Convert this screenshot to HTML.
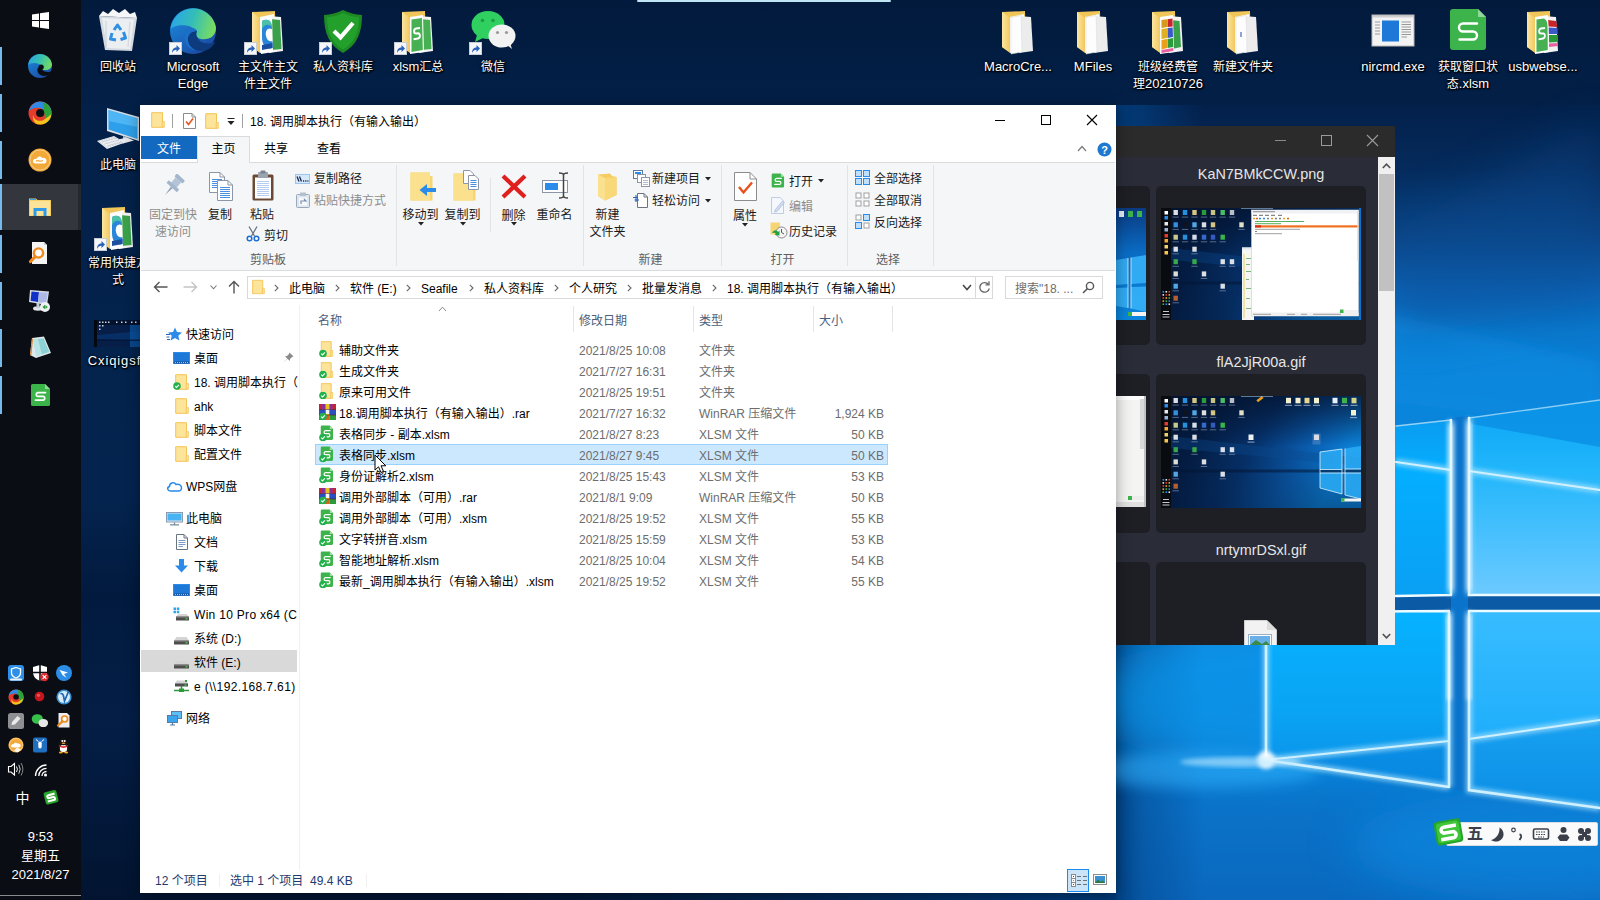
<!DOCTYPE html>
<html lang="zh-CN">
<head>
<meta charset="utf-8">
<title>18. 调用脚本执行（有输入输出）</title>
<style>
*{box-sizing:border-box;margin:0;padding:0}
html,body{width:1600px;height:900px;overflow:hidden;background:#04183c}
body{font-family:"Liberation Sans","Noto Sans CJK SC",sans-serif;font-size:12px;color:#000;position:relative}
.abs{position:absolute}
#wall{position:absolute;left:0;top:0;width:1600px;height:900px}
/* taskbar */
#tb{position:absolute;left:0;top:0;width:81px;height:900px;background:#0a0d13}
#tb .ind{position:absolute;left:0;width:2px;height:38px;background:#76b9ed}
#tb .act{position:absolute;left:0;top:184px;width:81px;height:46px;background:#33363c}
#tb .clock{position:absolute;left:0;width:81px;text-align:center;color:#fff;font-size:13px;line-height:19px}
/* desktop icons */
.dico{position:absolute;width:76px;text-align:center;color:#fff;font-size:12px;line-height:17px;margin-top:0px;text-shadow:0 1px 2px #000,0 0 3px #000,1px 1px 1px #000}
.dico .lt{font-size:13px;line-height:10px}
.dico svg{display:block;margin:0 auto 4px auto}
/* explorer */
#ex{position:absolute;left:140px;top:105px;width:976px;height:788px;background:#fff;box-shadow:0 2px 14px rgba(0,0,0,0.38)}
#ex .title{position:absolute;left:0;top:0;width:100%;height:31px;background:#fff}
#ex .tabs{position:absolute;left:1px;top:31px;width:974px;height:26px;background:#fff}
#ex .ribbon{position:absolute;left:1px;top:57px;width:974px;height:109px;background:#f5f6f7;border-top:1px solid #dadbdc;border-bottom:1px solid #dadbdc}
.rt{position:absolute;font-size:12px;line-height:17px;color:#1a1a1a;white-space:nowrap}
.rt.c{text-align:center}
.rt.dis{color:#8d8d8d}
.rt.grp{color:#5f5f5f}
.sep{position:absolute;width:1px;background:#e2e3e4}
/* list */
.row{position:absolute;left:175px;height:21px;width:573px;font-size:12px;line-height:21px;white-space:nowrap}
.row span{position:absolute;top:2px}
.row .n{left:24px;color:#000}
.row .d{left:264px;color:#6d6d6d}
.row .t{left:384px;color:#6d6d6d}
.row .s{right:4px;color:#6d6d6d;text-align:right}
.row svg{position:absolute;left:3px;top:2px}
.nav{position:absolute;font-size:12px;line-height:24px;height:24px;white-space:nowrap;color:#000}
.nav svg{position:absolute;top:4px}
/* dark viewer */
#dv{position:absolute;left:1116px;top:126px;width:279px;height:519px;background:#2a2d38;overflow:hidden}
</style>
</head>
<body>
<svg id="wall" viewBox="0 0 1600 900" width="1600" height="900">
<defs>
<linearGradient id="gLeft" x1="0" y1="0" x2="0" y2="1">
<stop offset="0" stop-color="#021a3c"/><stop offset="0.12" stop-color="#032048"/><stop offset="0.55" stop-color="#04244f"/><stop offset="0.66" stop-color="#021a3e"/><stop offset="0.8" stop-color="#041e46"/><stop offset="1" stop-color="#021430"/>
</linearGradient>
<linearGradient id="gSky" x1="0" y1="105" x2="0" y2="900" gradientUnits="userSpaceOnUse">
<stop offset="0" stop-color="#03204a"/><stop offset="0.08" stop-color="#052b5c"/><stop offset="0.17" stop-color="#094688"/><stop offset="0.235" stop-color="#0a62b4"/><stop offset="0.285" stop-color="#0a78cc"/><stop offset="0.37" stop-color="#0a84da"/><stop offset="0.5" stop-color="#0a88de"/><stop offset="0.7" stop-color="#0a84da"/><stop offset="0.85" stop-color="#0a76cc"/><stop offset="1" stop-color="#0a68be"/>
</linearGradient>
<linearGradient id="gFade" x1="1114" y1="0" x2="1204" y2="0" gradientUnits="userSpaceOnUse">
<stop offset="0" stop-color="#003a78" stop-opacity="0.9"/><stop offset="0.35" stop-color="#04488e" stop-opacity="0.5"/><stop offset="1" stop-color="#06408a" stop-opacity="0"/>
</linearGradient>
<linearGradient id="gBot" x1="500" y1="0" x2="1116" y2="0" gradientUnits="userSpaceOnUse">
<stop offset="0" stop-color="#003a78" stop-opacity="0"/><stop offset="1" stop-color="#003a78" stop-opacity="1"/>
</linearGradient>
<linearGradient id="gPaneLL" x1="0" y1="611" x2="0" y2="790" gradientUnits="userSpaceOnUse">
<stop offset="0" stop-color="#06b2ff"/><stop offset="0.55" stop-color="#0aa4f4"/><stop offset="1" stop-color="#0b8ee6"/>
</linearGradient>
<linearGradient id="gPaneLR" x1="0" y1="611" x2="0" y2="800" gradientUnits="userSpaceOnUse">
<stop offset="0" stop-color="#38bcff"/><stop offset="0.6" stop-color="#22b0fc"/><stop offset="1" stop-color="#0d94ea"/>
</linearGradient>
<linearGradient id="gPaneUR" x1="0" y1="418" x2="0" y2="595" gradientUnits="userSpaceOnUse">
<stop offset="0" stop-color="#10a8f6"/><stop offset="0.3" stop-color="#22b6fb"/><stop offset="1" stop-color="#6ccaff"/>
</linearGradient>
<linearGradient id="gPaneUL" x1="0" y1="420" x2="0" y2="595" gradientUnits="userSpaceOnUse">
<stop offset="0" stop-color="#0a9cf0"/><stop offset="0.3" stop-color="#04aeff"/><stop offset="1" stop-color="#0aa0f4"/>
</linearGradient>
<filter id="b2" x="-20%" y="-20%" width="140%" height="140%"><feGaussianBlur stdDeviation="2"/></filter>
<filter id="b6" x="-30%" y="-30%" width="160%" height="160%"><feGaussianBlur stdDeviation="7"/></filter>
<filter id="b20" x="-30%" y="-30%" width="160%" height="160%"><feGaussianBlur stdDeviation="22"/></filter>
</defs>
<rect width="1600" height="900" fill="url(#gLeft)"/>
<rect x="1114" y="105" width="486" height="795" fill="url(#gSky)"/>
<rect x="1114" y="105" width="90" height="795" fill="url(#gFade)"/>
<rect x="500" y="880" width="616" height="20" fill="url(#gBot)"/>
<!-- soft beams in the sky -->
<polygon points="1380,312 1600,362 1600,430 1380,400" fill="#0b8ce2" opacity="0.6" filter="url(#b6)"/>
<polygon points="1395,230 1600,120 1600,300 1395,340" fill="#0a4f98" opacity="0.35" filter="url(#b20)"/>
<!-- floor glow -->
<ellipse cx="1330" cy="700" rx="260" ry="70" fill="#0aa0f4" opacity="0.55" filter="url(#b20)"/>
<ellipse cx="1200" cy="770" rx="120" ry="18" fill="#35b4ff" opacity="0.5" filter="url(#b6)"/>
<ellipse cx="1540" cy="845" rx="190" ry="55" fill="#0f8ee6" opacity="0.55" filter="url(#b20)"/>
<!-- frame bars (dark) -->
<polygon points="1260,596 1600,594 1600,612 1260,613" fill="#0a5aa6"/>
<polygon points="1451,418 1468,416 1468,792 1451,789" fill="#0a74cc"/>
<!-- panes -->
<polygon points="1266,440 1451,420 1451,595 1266,597" fill="url(#gPaneUL)"/>
<polygon points="1468,418 1600,400 1600,595 1468,595" fill="url(#gPaneUR)"/>
<polygon points="1468,418 1600,400 1600,447 1472,424" fill="#0a8ee4" opacity="0.8"/>
<polygon points="1266,612 1449,611 1449,787 1266,760" fill="url(#gPaneLL)"/>
<polygon points="1468,611 1600,611 1600,808 1468,790" fill="url(#gPaneLR)"/>
<!-- lower shading under beams -->
<polygon points="1266,760 1449,741 1449,787" fill="#0a84dc" opacity="0.55"/>
<polygon points="1468,739 1600,720 1600,808 1468,790" fill="#0a8ce2" opacity="0.45"/>
<!-- bright edges -->
<g stroke="#eefbff" stroke-width="2.6" fill="none" stroke-linecap="round">
<path d="M1266,470 L1266,760" />
<path d="M1266,760 L1449,787 M1449,611 L1449,787 M1300,612 L1449,611"/>
<path d="M1469,611 L1469,790 L1600,808 M1469,611 L1600,611"/>
<path d="M1451,420 L1451,595 M1396,596 L1451,595"/><path d="M1396,426 L1451,420" stroke-width="1.4" opacity="0.6"/>
<path d="M1469,418 L1469,595 L1600,595"/><path d="M1469,418 L1600,400" stroke-width="1.4" opacity="0.55"/>
<path d="M1266,760 L1449,741 M1469,739 L1600,720" stroke-width="2"/>
<path d="M1396,462 L1451,470 M1469,471 L1600,490" stroke-width="2"/>
</g>
<g stroke="#b4e8ff" stroke-width="7" fill="none" opacity="0.6" filter="url(#b2)">
<path d="M1266,560 L1266,760 L1449,787 M1449,611 L1449,787 M1469,611 L1469,790 L1600,808 M1451,420 L1451,595 M1469,418 L1469,595 M1266,760 L1449,741 M1469,739 L1600,720 M1396,462 L1451,470 M1469,471 L1600,490"/>
</g>
<path d="M1449,615 V700 M1469,615 V700 M1451,425 V590 M1469,423 V590" stroke="#ffffff" stroke-width="5" opacity="0.55" filter="url(#b2)" fill="none"/>
<circle cx="1266" cy="760" r="9" fill="#fff" opacity="0.9" filter="url(#b2)"/>
<ellipse cx="1240" cy="762" rx="60" ry="5" fill="#bfeaff" opacity="0.6" filter="url(#b2)"/>
<!-- top centre light bar -->
<rect x="637" y="0" width="254" height="2" rx="1" fill="#bfe6f5"/>
</svg>


<svg width="0" height="0" style="position:absolute">
<defs>
<linearGradient id="fy" x1="0" y1="0" x2="1" y2="0"><stop offset="0" stop-color="#fbe6a2"/><stop offset="1" stop-color="#f2c85e"/></linearGradient>
<linearGradient id="edA" x1="0" y1="0.2" x2="1" y2="0.4"><stop offset="0" stop-color="#2aa4ec"/><stop offset="0.5" stop-color="#33bdb8"/><stop offset="1" stop-color="#78dc62"/></linearGradient>
<linearGradient id="edB" x1="0" y1="0" x2="0.7" y2="1"><stop offset="0" stop-color="#1b93e4"/><stop offset="1" stop-color="#1b4aa4"/></linearGradient>
<symbol id="fold" viewBox="0 0 48 48">
<path d="M8,5 L31,4 L32,40 L16,45 L8,40Z" fill="#f0c659"/>
<path d="M8,5 L16,11 L16,46 L8,40Z" fill="url(#fy)"/>
</symbol>
<symbol id="pgs" viewBox="0 0 48 48">
<path d="M16,10 L30,7 L30,43 L16,46Z" fill="#fafafa"/>
<path d="M24,9 L37,10 L39,44 L25,46Z" fill="#ececec"/>
<path d="M17,10.500 L27,8.500 L28,45 L17,47Z" fill="#fdfdfd" stroke="#d8d8d8" stroke-width="0.500"/>
</symbol>
<symbol id="sc" viewBox="0 0 13 13">
<rect x="0" y="0" width="13" height="13" fill="#f4f6f8"/><rect x="0.500" y="0.500" width="12" height="12" fill="none" stroke="#c9ced6" stroke-width="1"/>
<path d="M3,11 C3,7 5,5.500 7.500,5.500 V3 L11,6.500 L7.500,10 V7.800 C5.500,7.800 4,8.500 3,11Z" fill="#2a62b8"/>
</symbol>
<symbol id="edge" viewBox="0 0 48 48">
<circle cx="24" cy="24" r="23" fill="url(#edB)"/>
<path d="M1.500,22 A23,23 0 0 1 47,20.500 C47,30 39.500,33 32,32 C27,31 26,27 28,24 C20.500,15.500 5,17.500 1.500,22Z" fill="url(#edA)"/>
<path d="M28,24 C22,24 18,28 19,34 C20,41 28,46 38,43 C42,41.500 45,38 46.500,34.500 C42,37.500 32,37.500 28.500,31 C27,28.500 27.200,26 28,24Z" fill="#0d3b7e"/>
<path d="M28,24 C22,24 18,28 19,34 C19.600,38 22.500,41.500 27,43.300 C15,42 12,28 20,22 C23,20 26.500,21.500 28,24Z" fill="#1a6fc8"/>
</symbol>
<symbol id="wpsS" viewBox="0 0 36 41">
<path d="M3,0 H28 L36,8 V38 A3,3 0 0 1 33,41 H3 A3,3 0 0 1 0,38 V3 A3,3 0 0 1 3,0Z" fill="#3cb44b"/>
<path d="M28,0 L36,8 H28Z" fill="#8fd898"/>
<path d="M27,14.500 H13 A4,4 0 0 0 13,22.500 H23 A4,4 0 0 1 23,30.500 H9.500" fill="none" stroke="#fff" stroke-width="2.400" stroke-linecap="round"/>
</symbol>
</defs>
</svg>

<div class="dico" style="left:80px;top:7px"><svg width="48" height="48" viewBox="0 0 48 48"><path d="M5,9 L43,11 L38,44 L11,43Z" fill="#dfe5ea" opacity="0.950"/><path d="M5,9 L9,4 L14,7 L19,2 L25,6 L31,2 L36,7 L41,5 L43,11Z" fill="#f4f6f8"/><path d="M8,11 L40,12.500 L36,42 L13,41Z" fill="#eef1f4" opacity="0.900"/><path d="M12,14 L12,40 M36,15 L34,40" stroke="#cfd6dc" stroke-width="1.500" opacity="0.800"/><g fill="none" stroke="#2f8fe2" stroke-width="3" stroke-linejoin="round"><path d="M20,23 L23.500,18 L27,23"/><path d="M29.500,25 L31.500,31 L26.500,32.500"/><path d="M22,33 L16.500,32 L18,26"/></g></svg>回收站</div>
<div class="dico" style="left:155px;top:7px"><svg width="48" height="48" viewBox="0 0 48 48"><use href="#edge" x="0" y="0" width="48" height="48"/><use href="#sc" x="0" y="35" width="13" height="13"/></svg><span class="lt">Microsoft</span><br><span class="lt">Edge</span></div>
<div class="dico" style="left:230px;top:7px"><svg width="48" height="48" viewBox="0 0 48 48"><use href="#fold" width="48" height="48"/><path d="M16,10 L30,7 L30,43 L16,46Z" fill="#fafafa"/><path d="M24,9 L37,10 L39,44 L25,46Z" fill="#f2f2f2"/><path d="M26,12 L36,13 L37.500,42 L27,43Z" fill="#3aa14a"/><path d="M17,11 L28,9 L29,45 L17,47Z" fill="#fdfdfd"/><path d="M18,14 C24,11 28,14 28,22 C24,20 21,23 22,29 C23,34 27,35 28.500,34 L28.500,41 C22,43 18,38 18,30Z" fill="#2a86d8"/><path d="M18,14 C24,11 28,14 28,20 C24,16 20,18 18,22Z" fill="#4cc0a8"/><path d="M18,38 L28.500,36 L28.500,41 L18,43Z" fill="#1d4fa0"/><use href="#sc" x="0" y="35" width="13" height="13"/></svg>主文件主文<br>件主文件</div>
<div class="dico" style="left:305px;top:7px"><svg width="48" height="48" viewBox="0 0 48 48"><path d="M24,3 C30,6 36,7.500 43,8 C43,26 38,38 24,46 C10,38 5,26 5,8 C12,7.500 18,6 24,3Z" fill="#1d8a24"/><path d="M24,6 C29,8.500 34,9.800 40,10.300 C40,25 36,35.500 24,42.500 C12,35.500 8,25 8,10.300 C14,9.800 19,8.500 24,6Z" fill="#23a02c"/><path d="M15,24 L21.500,30.500 L34,16" fill="none" stroke="#fff" stroke-width="4.200"/><use href="#sc" x="0" y="35" width="13" height="13"/></svg>私人资料库</div>
<div class="dico" style="left:380px;top:7px"><svg width="48" height="48" viewBox="0 0 48 48"><use href="#fold" width="48" height="48"/><path d="M24,9 L37,10 L39,44 L25,46Z" fill="#f2f2f2"/><path d="M26,12 L36,13 L37.500,42 L27,43Z" fill="#46b052"/><path d="M16,10 L29,8 L30,45 L16,47Z" fill="#fdfdfd"/><path d="M17.500,12.500 L28,11 L28.800,43 L17.500,45Z" fill="#46b052"/><path d="M26,21 L22,21.500 C19.500,22 19.500,26.500 22,26.500 L24,26.300 C26.500,26.200 26.500,31 24,31.500 L19.500,32.300" fill="none" stroke="#fff" stroke-width="2"/><use href="#sc" x="0" y="35" width="13" height="13"/></svg><span class="lt">xlsm</span>汇总</div>
<div class="dico" style="left:455px;top:7px"><svg width="48" height="48" viewBox="0 0 48 48"><ellipse cx="19" cy="18" rx="16.500" ry="14" fill="#2fd060"/><path d="M8,28 L6,35 L14,31Z" fill="#2fd060"/><circle cx="13.500" cy="13.500" r="1.800" fill="#1e9a44"/><circle cx="24" cy="13.500" r="1.800" fill="#1e9a44"/><ellipse cx="33" cy="29" rx="13.500" ry="11.500" fill="#f2f2f2"/><path d="M38,38 L43,42 L41,36Z" fill="#f2f2f2"/><circle cx="28.500" cy="25.500" r="1.600" fill="#9a9a9a"/><circle cx="37.500" cy="25.500" r="1.600" fill="#9a9a9a"/><use href="#sc" x="0" y="35" width="13" height="13"/></svg>微信</div>
<div class="dico" style="left:980px;top:7px"><svg width="48" height="48" viewBox="0 0 48 48"><use href="#fold" width="48" height="48"/><use href="#pgs" width="48" height="48"/></svg><span class="lt">MacroCre...</span></div>
<div class="dico" style="left:1055px;top:7px"><svg width="48" height="48" viewBox="0 0 48 48"><use href="#fold" width="48" height="48"/><use href="#pgs" width="48" height="48"/></svg><span class="lt">MFiles</span></div>
<div class="dico" style="left:1130px;top:7px"><svg width="48" height="48" viewBox="0 0 48 48"><use href="#fold" width="48" height="48"/><path d="M24,9 L37,10 L39,44 L25,46Z" fill="#f2f2f2"/><path d="M27,13 L35.500,14 L37,40 L28,42Z" fill="#3aa14a"/><path d="M16,10 L29,8 L30,45 L16,47Z" fill="#fdfdfd"/><path d="M17.500,13 L23,12.200 L23,20 L17.500,21Z" fill="#d89a1c"/><path d="M23.500,12.200 L28.500,11.500 L28.700,19.500 L23.500,20Z" fill="#c8242c"/><path d="M17.500,22 L23,21.200 L23,31 L17.500,32Z" fill="#e0b020"/><path d="M23.500,21 L28.700,20.500 L29,30 L23.500,31Z" fill="#3a58c8"/><path d="M17.500,33 L23,32 L23,41 L17.500,42.500Z" fill="#e8a018"/><path d="M23.500,32 L29,31 L29.200,40 L23.500,41Z" fill="#2c9a38"/><path d="M17.500,43 L29.200,41 L29.300,44 L17.500,46Z" fill="#e860a0"/></svg>班级经费管<br>理<span class="lt">20210726</span></div>
<div class="dico" style="left:1205px;top:7px"><svg width="48" height="48" viewBox="0 0 48 48"><use href="#fold" width="48" height="48"/><use href="#pgs" width="48" height="48"/><rect x="21" y="25" width="2" height="5" fill="#8aa4d8"/></svg>新建文件夹</div>
<div class="dico" style="left:1355px;top:7px"><svg width="48" height="48" viewBox="0 0 48 48"><rect x="3" y="8" width="42" height="31" fill="#f3f3f3"/><rect x="3" y="8" width="42" height="2.500" fill="#cfcfcf"/><rect x="3" y="8" width="42" height="31" fill="none" stroke="#b9b9b9" stroke-width="1"/><rect x="13" y="13.500" width="17" height="21" fill="#1d78d8"/><g stroke="#9a9a9a" stroke-width="1"><path d="M32.500,15 H42 M32.500,17.500 H42 M32.500,20 H42 M32.500,22.500 H42 M32.500,25 H42 M32.500,27.500 H42 M32.500,30 H38 M6,15 H11 M6,18 H11 M6,21 H11 M6,24 H11 M6,27 H11"/></g></svg><span class="lt">nircmd.exe</span></div>
<div class="dico" style="left:1430px;top:7px"><svg width="48" height="48" viewBox="0 0 48 48"><use href="#wpsS" x="6" y="2" width="36" height="41"/></svg>获取窗口状<br>态<span class="lt">.xlsm</span></div>
<div class="dico" style="left:1505px;top:7px"><svg width="48" height="48" viewBox="0 0 48 48"><use href="#fold" width="48" height="48"/><path d="M24,9 L37,10 L39,44 L25,46Z" fill="#f2f2f2"/><path d="M29,13 L37,14 L38.500,20 L29.500,19.500Z" fill="#c8242c"/><path d="M29.500,20.500 L38.500,21 L38.800,27 L29.800,27Z" fill="#3a58c8"/><path d="M29.800,28 L38.800,28 L39,35 L30,35.500Z" fill="#2c9a38"/><path d="M30,36.500 L39,36 L39,39 L30,40Z" fill="#e860a0"/><path d="M16,10 L29,8 L30,45 L16,47Z" fill="#fdfdfd"/><path d="M17.500,12.500 L25,11.500 C28,13 28.500,16 28.500,20 L28.800,43 L17.500,45Z" fill="#46b052"/><path d="M26,21 L22,21.500 C19.500,22 19.500,26.500 22,26.500 L24,26.300 C26.500,26.200 26.500,31 24,31.500 L19.500,32.300" fill="none" stroke="#fff" stroke-width="1.800"/></svg><span class="lt">usbwebse...</span></div>
<div class="dico" style="left:80px;top:105px"><svg width="48" height="48" viewBox="0 0 48 48"><path d="M13,3 L45,12 L45,36 L13,26Z" fill="#d9dee4"/><path d="M14.500,5 L43.500,13.200 L43.500,34 L14.500,24.500Z" fill="#2e9fea"/><path d="M14.500,5 L43.500,13.200 L43.500,22 L14.500,16Z" fill="#5cc0f8" opacity="0.700"/><path d="M29,31 L33,32.500 L33,36 L29,35Z" fill="#b9c0c8"/><path d="M22,35 L33,32.500 L40,35.500 L29,38.500Z" fill="#e3e7eb"/><path d="M3,36 L20,31 L31,37.500 L13,44Z" fill="#eef0f3"/><path d="M5,36.300 L20,32 L28.500,37.300 L13,42.500Z" fill="none" stroke="#b9c0c8" stroke-width="0.800" stroke-dasharray="1.500 1"/><path d="M8,37 L22,33.200 M10.500,39 L25,35 M13,41 L27.500,36.800" stroke="#b9c0c8" stroke-width="0.700"/></svg>此电脑</div>
<div class="dico" style="left:80px;top:203px"><svg width="48" height="48" viewBox="0 0 48 48"><use href="#fold" width="48" height="48"/><path d="M16,10 L30,7 L30,43 L16,46Z" fill="#fafafa"/><path d="M24,9 L37,10 L39,44 L25,46Z" fill="#f2f2f2"/><path d="M26,12 L36,13 L37.500,42 L27,43Z" fill="#3aa14a"/><path d="M17,11 L28,9 L29,45 L17,47Z" fill="#fdfdfd"/><path d="M18,14 C24,11 28,14 28,22 C24,20 21,23 22,29 C23,34 27,35 28.500,34 L28.500,41 C22,43 18,38 18,30Z" fill="#2a86d8"/><path d="M18,14 C24,11 28,14 28,20 C24,16 20,18 18,22Z" fill="#4cc0a8"/><path d="M18,38 L28.500,36 L28.500,41 L18,43Z" fill="#1d4fa0"/><use href="#sc" x="0" y="35" width="13" height="13"/></svg>常用快捷方<br>式</div>
<div class="dico" style="left:80px;top:301px"><svg width="48" height="48" viewBox="0 0 48 48"><rect x="0" y="19" width="48" height="27" fill="#071f48"/><rect x="0" y="19" width="48" height="5" fill="#04122e"/><rect x="0" y="19" width="3" height="27" fill="#05080e"/><path d="M3,34 L48,30 V40 L3,38Z" fill="#0a3a7a" opacity="0.600"/><rect x="36" y="24" width="12" height="22" fill="#0a58a8" opacity="0.700"/><rect x="3" y="38.500" width="45" height="1.500" fill="#031230" opacity="0.700"/><g fill="#c8d4e4"><rect x="5" y="20.500" width="1.500" height="1.500"/><rect x="8" y="20.500" width="1.500" height="1.500"/><rect x="11" y="20.500" width="1.500" height="1.500"/><rect x="14" y="20.500" width="1.500" height="1.500"/><rect x="22" y="20.500" width="1.500" height="1.500"/><rect x="27" y="20.500" width="1.500" height="1.500"/><rect x="31" y="20.500" width="1.500" height="1.500"/><rect x="37" y="20.500" width="1.500" height="1.500"/><rect x="41" y="20.500" width="1.500" height="1.500"/><rect x="5" y="24" width="1.500" height="1.500"/><rect x="8" y="24" width="1.500" height="1.500"/><rect x="5" y="27.500" width="1.500" height="1.500"/></g></svg><span class="lt" style="letter-spacing:0.9px;margin-right:-1px">Cxiqigsf7</span></div>
<div id="dv">
<div class="abs" style="left:0;top:0;width:280px;height:31px;background:#2b2b2b"></div>
<svg class="abs" style="left:157px;top:8px" width="110" height="14" viewBox="0 0 110 14"><path d="M2,6.500 H13" stroke="#8a8a8a" stroke-width="1"/><rect x="48.500" y="1.500" width="10" height="10" fill="none" stroke="#9a9a9a" stroke-width="1"/><path d="M94,1 L105,12 M105,1 L94,12" stroke="#9a9a9a" stroke-width="1.100"/></svg>
<div class="abs" style="left:262px;top:31px;width:17px;height:488px;background:#f0f0f0"></div>
<div class="abs" style="left:263px;top:48px;width:15px;height:117px;background:#c1c1c1"></div>
<svg class="abs" style="left:266px;top:37px" width="9" height="6" viewBox="0 0 9 6"><path d="M0.800,5 L4.500,1.200 L8.200,5" fill="none" stroke="#505050" stroke-width="1.600"/></svg>
<svg class="abs" style="left:266px;top:507px" width="9" height="6" viewBox="0 0 9 6"><path d="M0.800,1 L4.500,4.800 L8.200,1" fill="none" stroke="#505050" stroke-width="1.600"/></svg>
<div class="abs" style="left:39px;top:39px;width:212px;text-align:center;color:#e6e6e6;font-size:14.4px;line-height:18px;font-family:'Liberation Sans',sans-serif">KaN7BMkCCW.png</div>
<div class="abs" style="left:40px;top:60px;width:210px;height:159px;background:#1e1f25;border-radius:5px"></div>
<div class="abs" style="left:-11px;top:60px;width:45px;height:159px;background:#1e1f25;border-radius:5px"></div>
<div class="abs" style="left:45px;top:82px;width:200px;height:112px"><svg width="200" height="112" viewBox="0 0 200 112" style="display:block"><defs><linearGradient id="mga" x1="0" y1="0" x2="1" y2="0.300"><stop offset="0" stop-color="#03142f"/><stop offset="0.300" stop-color="#041e46"/><stop offset="0.550" stop-color="#06326c"/><stop offset="0.800" stop-color="#0a5cae"/><stop offset="1" stop-color="#0b80d6"/></linearGradient><linearGradient id="mva" x1="0" y1="0" x2="0" y2="1"><stop offset="0" stop-color="#03132f" stop-opacity="0.750"/><stop offset="0.450" stop-color="#03132f" stop-opacity="0"/><stop offset="1" stop-color="#03132f" stop-opacity="0.350"/></linearGradient></defs><rect width="200" height="112" fill="url(#mga)"/><rect width="200" height="112" fill="url(#mva)"/><path d="M10,40 L200,62 V70 L10,52Z" fill="#0c4a90" opacity="0.350"/><rect x="10" y="73.500" width="190" height="3" fill="#031634" opacity="0.550"/><rect x="0" y="0" width="10" height="112" fill="#080b10"/><rect x="3.500" y="3" width="3.500" height="3.500" fill="#ffffff"/><rect x="3.500" y="8" width="3.500" height="3.500" fill="#2a8be8"/><rect x="3.500" y="14" width="3.500" height="3.500" fill="#e8e8e8"/><rect x="3.500" y="20" width="3.500" height="3.500" fill="#9ab4d8"/><rect x="3.500" y="26" width="3.500" height="3.500" fill="#e53b2c"/><rect x="3.500" y="31" width="3.500" height="3.500" fill="#f3a83a"/><rect x="3.500" y="37" width="3.500" height="3.500" fill="#f0d070"/><rect x="3.500" y="43" width="3.500" height="3.500" fill="#f5c74e"/><rect x="1.5" y="83.0" width="1.600" height="1.600" fill="#2a8be8"/><rect x="4.5" y="83.0" width="1.600" height="1.600" fill="#e8e8e8"/><rect x="7.5" y="83.0" width="1.600" height="1.600" fill="#e53b2c"/><rect x="1.5" y="86.1" width="1.600" height="1.600" fill="#e8e8e8"/><rect x="4.5" y="86.1" width="1.600" height="1.600" fill="#e53b2c"/><rect x="7.5" y="86.1" width="1.600" height="1.600" fill="#f3a83a"/><rect x="1.5" y="89.2" width="1.600" height="1.600" fill="#e53b2c"/><rect x="4.5" y="89.2" width="1.600" height="1.600" fill="#f3a83a"/><rect x="7.5" y="89.2" width="1.600" height="1.600" fill="#3cb44b"/><rect x="1.5" y="92.3" width="1.600" height="1.600" fill="#f3a83a"/><rect x="4.5" y="92.3" width="1.600" height="1.600" fill="#3cb44b"/><rect x="7.5" y="92.3" width="1.600" height="1.600" fill="#2a8be8"/><rect x="1.5" y="95.4" width="1.600" height="1.600" fill="#3cb44b"/><rect x="4.5" y="95.4" width="1.600" height="1.600" fill="#2a8be8"/><rect x="7.5" y="95.4" width="1.600" height="1.600" fill="#e8e8e8"/><rect x="2" y="103" width="6" height="1" fill="#c8c8c8"/><rect x="1.500" y="106" width="7" height="1" fill="#c8c8c8"/><rect x="1.500" y="108.500" width="7" height="1" fill="#c8c8c8"/><rect x="12.5" y="2.0" width="4.400" height="5" fill="#eef0f2" opacity="0.920"/><rect x="11.5" y="8.6" width="6.400" height="1" fill="#a8b8d4" opacity="0.500"/><rect x="21.8" y="2.0" width="4.400" height="5" fill="#2a9be8" opacity="0.920"/><rect x="20.8" y="8.6" width="6.400" height="1" fill="#a8b8d4" opacity="0.500"/><rect x="31.3" y="2.0" width="4.400" height="5" fill="#e8d48a" opacity="0.920"/><rect x="30.3" y="8.6" width="6.400" height="1" fill="#a8b8d4" opacity="0.500"/><rect x="40.8" y="2.0" width="4.400" height="5" fill="#2aa83a" opacity="0.920"/><rect x="39.8" y="8.6" width="6.400" height="1" fill="#a8b8d4" opacity="0.500"/><rect x="49.8" y="2.0" width="4.400" height="5" fill="#d8d48a" opacity="0.920"/><rect x="48.8" y="8.6" width="6.400" height="1" fill="#a8b8d4" opacity="0.500"/><rect x="59.5" y="2.0" width="4.400" height="5" fill="#4ccc6a" opacity="0.920"/><rect x="58.5" y="8.6" width="6.400" height="1" fill="#a8b8d4" opacity="0.500"/><rect x="68.8" y="2.0" width="4.400" height="5" fill="#c8ccd4" opacity="0.920"/><rect x="67.8" y="8.6" width="6.400" height="1" fill="#a8b8d4" opacity="0.500"/><rect x="12.5" y="14.3" width="4.400" height="5" fill="#3a9ae8" opacity="0.920"/><rect x="11.5" y="20.9" width="6.400" height="1" fill="#a8b8d4" opacity="0.500"/><rect x="21.8" y="14.3" width="4.400" height="5" fill="#10141c" opacity="0.920"/><rect x="20.8" y="20.9" width="6.400" height="1" fill="#a8b8d4" opacity="0.500"/><rect x="31.3" y="14.3" width="4.400" height="5" fill="#5ab4f0" opacity="0.920"/><rect x="30.3" y="20.9" width="6.400" height="1" fill="#a8b8d4" opacity="0.500"/><rect x="40.8" y="14.3" width="4.400" height="5" fill="#f0f0f0" opacity="0.920"/><rect x="39.8" y="20.9" width="6.400" height="1" fill="#a8b8d4" opacity="0.500"/><rect x="49.8" y="14.3" width="4.400" height="5" fill="#e8d48a" opacity="0.920"/><rect x="48.8" y="20.9" width="6.400" height="1" fill="#a8b8d4" opacity="0.500"/><rect x="78.3" y="14.3" width="4.400" height="5" fill="#f4f0d0" opacity="0.920"/><rect x="77.3" y="20.9" width="6.400" height="1" fill="#a8b8d4" opacity="0.500"/><rect x="12.5" y="26.7" width="4.400" height="5" fill="#d8d890" opacity="0.920"/><rect x="11.5" y="33.3" width="6.400" height="1" fill="#a8b8d4" opacity="0.500"/><rect x="21.8" y="26.7" width="4.400" height="5" fill="#2a9be8" opacity="0.920"/><rect x="20.8" y="33.3" width="6.400" height="1" fill="#a8b8d4" opacity="0.500"/><rect x="31.3" y="26.7" width="4.400" height="5" fill="#e8f0fa" opacity="0.920"/><rect x="30.3" y="33.3" width="6.400" height="1" fill="#a8b8d4" opacity="0.500"/><rect x="40.8" y="26.7" width="4.400" height="5" fill="#3a70d8" opacity="0.920"/><rect x="39.8" y="33.3" width="6.400" height="1" fill="#a8b8d4" opacity="0.500"/><rect x="49.8" y="26.7" width="4.400" height="5" fill="#3a60c8" opacity="0.920"/><rect x="48.8" y="33.3" width="6.400" height="1" fill="#a8b8d4" opacity="0.500"/><rect x="59.5" y="26.7" width="4.400" height="5" fill="#3cc44b" opacity="0.920"/><rect x="58.5" y="33.3" width="6.400" height="1" fill="#a8b8d4" opacity="0.500"/><rect x="12.5" y="38.7" width="4.400" height="5" fill="#eef0f2" opacity="0.920"/><rect x="11.5" y="45.3" width="6.400" height="1" fill="#a8b8d4" opacity="0.500"/><rect x="31.3" y="38.7" width="4.400" height="5" fill="#eef0f2" opacity="0.920"/><rect x="30.3" y="45.3" width="6.400" height="1" fill="#a8b8d4" opacity="0.500"/><rect x="12.5" y="51.2" width="4.400" height="5" fill="#3cb44b" opacity="0.920"/><rect x="11.5" y="57.8" width="6.400" height="1" fill="#a8b8d4" opacity="0.500"/><rect x="31.3" y="51.2" width="4.400" height="5" fill="#3cb44b" opacity="0.920"/><rect x="30.3" y="57.8" width="6.400" height="1" fill="#a8b8d4" opacity="0.500"/><rect x="59.5" y="51.2" width="4.400" height="5" fill="#eef0f2" opacity="0.920"/><rect x="58.5" y="57.8" width="6.400" height="1" fill="#a8b8d4" opacity="0.500"/><rect x="68.8" y="51.2" width="4.400" height="5" fill="#eef0f2" opacity="0.920"/><rect x="67.8" y="57.8" width="6.400" height="1" fill="#a8b8d4" opacity="0.500"/><rect x="12.5" y="63.4" width="4.400" height="5" fill="#f0f0e0" opacity="0.920"/><rect x="11.5" y="70.0" width="6.400" height="1" fill="#a8b8d4" opacity="0.500"/><rect x="40.8" y="63.4" width="4.400" height="5" fill="#eef0f2" opacity="0.920"/><rect x="39.8" y="70.0" width="6.400" height="1" fill="#a8b8d4" opacity="0.500"/><rect x="12.5" y="75.7" width="4.400" height="5" fill="#5ab4f0" opacity="0.920"/><rect x="11.5" y="82.3" width="6.400" height="1" fill="#a8b8d4" opacity="0.500"/><rect x="59.5" y="75.7" width="4.400" height="5" fill="#eef0f2" opacity="0.920"/><rect x="58.5" y="82.3" width="6.400" height="1" fill="#a8b8d4" opacity="0.500"/><rect x="12.5" y="87.7" width="4.400" height="5" fill="#c8642c" opacity="0.920"/><rect x="11.5" y="94.3" width="6.400" height="1" fill="#a8b8d4" opacity="0.500"/><rect x="81" y="39.500" width="12" height="72.500" fill="#f6f6f4"/><rect x="81" y="39.500" width="12" height="2" fill="#dfe8f0"/><rect x="82" y="46" width="2" height="64" fill="#f0e4a8"/><g fill="#7ab87a"><rect x="85" y="50" width="5" height="1"/><rect x="85" y="56" width="4" height="1"/><rect x="85" y="63" width="5" height="1"/><rect x="85" y="71" width="3" height="1"/><rect x="85" y="80" width="5" height="1"/><rect x="85" y="90" width="4" height="1"/><rect x="85" y="100" width="5" height="1"/></g><rect x="90.500" y="2" width="107" height="106" fill="#ffffff" stroke="#c8ccd4" stroke-width="0.600"/><rect x="90.500" y="2" width="107" height="3.500" fill="#f0f2f6"/><rect x="92" y="3.200" width="22" height="1" fill="#8a8a8a"/><g fill="#6a6a6a"><rect x="92" y="6.800" width="4" height="1"/><rect x="98" y="6.800" width="4" height="1"/><rect x="104" y="6.800" width="4" height="1"/><rect x="110" y="6.800" width="4" height="1"/><rect x="117" y="6.800" width="4" height="1"/></g><g><rect x="92" y="9.800" width="2" height="1.500" fill="#e8a018"/><rect x="95" y="9.800" width="2" height="1.500" fill="#d8641c"/><rect x="98" y="9.800" width="2" height="1.500" fill="#2a8be8"/><rect x="102" y="9.800" width="2" height="1.500" fill="#2a8be8"/><rect x="106" y="9.800" width="2" height="1.500" fill="#808080"/><rect x="110" y="9.800" width="2" height="1.500" fill="#e8a018"/><rect x="114" y="9.800" width="2" height="1.500" fill="#808080"/><rect x="118" y="9.800" width="2" height="1.500" fill="#808080"/><rect x="122" y="9.800" width="2" height="1.500" fill="#e8a018"/><rect x="126" y="9.800" width="2" height="1.500" fill="#d8641c"/></g><rect x="94" y="13" width="49" height="1" fill="#58b060"/><rect x="94" y="15.200" width="26" height="1" fill="#58b060"/><rect x="94" y="17.300" width="103.500" height="2.200" fill="#f07020"/><rect x="94" y="17.300" width="6" height="2.200" fill="#d83018"/><rect x="94" y="20.800" width="45" height="1" fill="#a0a0a0"/><rect x="94" y="23" width="2" height="1" fill="#808080"/><rect x="94" y="25.200" width="27" height="1" fill="#a0a0a0"/><rect x="90.500" y="104.500" width="107" height="3.500" fill="#f0f0f0"/><rect x="92" y="105.800" width="18" height="1" fill="#a0a0a0"/><rect x="126" y="105.800" width="8" height="1" fill="#a0a0a0"/><rect x="140" y="105.800" width="6" height="1" fill="#a0a0a0"/><rect x="152" y="105.800" width="28" height="1" fill="#a0a0a0"/><rect x="179" y="102" width="18" height="3" fill="#f0f0f0"/><rect x="179" y="101.500" width="3.500" height="3.500" fill="#3cb44b"/><rect x="196.300" y="3" width="1.200" height="50" fill="#dcdcdc"/><rect x="198" y="0" width="2" height="112" fill="#0a72cc"/><rect x="80" y="0" width="32" height="0.800" fill="#a8c8e0" opacity="0.700"/></svg></div>
<div class="abs" style="left:39px;top:227px;width:212px;text-align:center;color:#e6e6e6;font-size:14.4px;line-height:18px;font-family:'Liberation Sans',sans-serif">flA2JjR00a.gif</div>
<div class="abs" style="left:40px;top:248px;width:210px;height:159px;background:#1e1f25;border-radius:5px"></div>
<div class="abs" style="left:-11px;top:248px;width:45px;height:159px;background:#1e1f25;border-radius:5px"></div>
<div class="abs" style="left:45px;top:270px;width:200px;height:112px"><svg width="200" height="112" viewBox="0 0 200 112" style="display:block"><defs><linearGradient id="mgb" x1="0" y1="0" x2="1" y2="0.300"><stop offset="0" stop-color="#03142f"/><stop offset="0.300" stop-color="#041e46"/><stop offset="0.550" stop-color="#06326c"/><stop offset="0.800" stop-color="#0a5cae"/><stop offset="1" stop-color="#0b80d6"/></linearGradient><linearGradient id="mvb" x1="0" y1="0" x2="0" y2="1"><stop offset="0" stop-color="#03132f" stop-opacity="0.750"/><stop offset="0.450" stop-color="#03132f" stop-opacity="0"/><stop offset="1" stop-color="#03132f" stop-opacity="0.350"/></linearGradient></defs><rect width="200" height="112" fill="url(#mgb)"/><rect width="200" height="112" fill="url(#mvb)"/><path d="M10,40 L200,62 V70 L10,52Z" fill="#0c4a90" opacity="0.350"/><rect x="10" y="73.500" width="190" height="3" fill="#031634" opacity="0.550"/><path d="M159,56 L181,53 V73 L159,73.500Z M184,52.500 L200,50 V73 L184,73Z M159,77 L181,77 V98 L159,92Z M184,77 L200,77 V103 L184,99Z" fill="#2cacf6" opacity="0.850"/><path d="M159,56 L181,53 V98 L159,92Z M184,52.500 V99 L200,103 M159,73.500 H181 M184,73 H200 M159,77 H200" stroke="#dff4ff" stroke-width="0.800" fill="none"/><rect x="0" y="0" width="10" height="112" fill="#080b10"/><rect x="3.500" y="3" width="3.500" height="3.500" fill="#ffffff"/><rect x="3.500" y="8" width="3.500" height="3.500" fill="#2a8be8"/><rect x="3.500" y="14" width="3.500" height="3.500" fill="#e8e8e8"/><rect x="3.500" y="20" width="3.500" height="3.500" fill="#9ab4d8"/><rect x="3.500" y="26" width="3.500" height="3.500" fill="#e53b2c"/><rect x="3.500" y="31" width="3.500" height="3.500" fill="#f3a83a"/><rect x="3.500" y="37" width="3.500" height="3.500" fill="#f0d070"/><rect x="3.500" y="43" width="3.500" height="3.500" fill="#f5c74e"/><rect x="1.5" y="83.0" width="1.600" height="1.600" fill="#2a8be8"/><rect x="4.5" y="83.0" width="1.600" height="1.600" fill="#e8e8e8"/><rect x="7.5" y="83.0" width="1.600" height="1.600" fill="#e53b2c"/><rect x="1.5" y="86.1" width="1.600" height="1.600" fill="#e8e8e8"/><rect x="4.5" y="86.1" width="1.600" height="1.600" fill="#e53b2c"/><rect x="7.5" y="86.1" width="1.600" height="1.600" fill="#f3a83a"/><rect x="1.5" y="89.2" width="1.600" height="1.600" fill="#e53b2c"/><rect x="4.5" y="89.2" width="1.600" height="1.600" fill="#f3a83a"/><rect x="7.5" y="89.2" width="1.600" height="1.600" fill="#3cb44b"/><rect x="1.5" y="92.3" width="1.600" height="1.600" fill="#f3a83a"/><rect x="4.5" y="92.3" width="1.600" height="1.600" fill="#3cb44b"/><rect x="7.5" y="92.3" width="1.600" height="1.600" fill="#2a8be8"/><rect x="1.5" y="95.4" width="1.600" height="1.600" fill="#3cb44b"/><rect x="4.5" y="95.4" width="1.600" height="1.600" fill="#2a8be8"/><rect x="7.5" y="95.4" width="1.600" height="1.600" fill="#e8e8e8"/><rect x="2" y="103" width="6" height="1" fill="#c8c8c8"/><rect x="1.500" y="106" width="7" height="1" fill="#c8c8c8"/><rect x="1.500" y="108.500" width="7" height="1" fill="#c8c8c8"/><rect x="12.5" y="2.0" width="4.400" height="5" fill="#eef0f2" opacity="0.920"/><rect x="11.5" y="8.6" width="6.400" height="1" fill="#a8b8d4" opacity="0.500"/><rect x="21.8" y="2.0" width="4.400" height="5" fill="#2a9be8" opacity="0.920"/><rect x="20.8" y="8.6" width="6.400" height="1" fill="#a8b8d4" opacity="0.500"/><rect x="31.3" y="2.0" width="4.400" height="5" fill="#e8d48a" opacity="0.920"/><rect x="30.3" y="8.6" width="6.400" height="1" fill="#a8b8d4" opacity="0.500"/><rect x="40.8" y="2.0" width="4.400" height="5" fill="#2aa83a" opacity="0.920"/><rect x="39.8" y="8.6" width="6.400" height="1" fill="#a8b8d4" opacity="0.500"/><rect x="49.8" y="2.0" width="4.400" height="5" fill="#d8d48a" opacity="0.920"/><rect x="48.8" y="8.6" width="6.400" height="1" fill="#a8b8d4" opacity="0.500"/><rect x="59.5" y="2.0" width="4.400" height="5" fill="#4ccc6a" opacity="0.920"/><rect x="58.5" y="8.6" width="6.400" height="1" fill="#a8b8d4" opacity="0.500"/><rect x="68.8" y="2.0" width="4.400" height="5" fill="#c8ccd4" opacity="0.920"/><rect x="67.8" y="8.6" width="6.400" height="1" fill="#a8b8d4" opacity="0.500"/><rect x="12.5" y="14.3" width="4.400" height="5" fill="#3a9ae8" opacity="0.920"/><rect x="11.5" y="20.9" width="6.400" height="1" fill="#a8b8d4" opacity="0.500"/><rect x="21.8" y="14.3" width="4.400" height="5" fill="#10141c" opacity="0.920"/><rect x="20.8" y="20.9" width="6.400" height="1" fill="#a8b8d4" opacity="0.500"/><rect x="31.3" y="14.3" width="4.400" height="5" fill="#5ab4f0" opacity="0.920"/><rect x="30.3" y="20.9" width="6.400" height="1" fill="#a8b8d4" opacity="0.500"/><rect x="40.8" y="14.3" width="4.400" height="5" fill="#f0f0f0" opacity="0.920"/><rect x="39.8" y="20.9" width="6.400" height="1" fill="#a8b8d4" opacity="0.500"/><rect x="49.8" y="14.3" width="4.400" height="5" fill="#e8d48a" opacity="0.920"/><rect x="48.8" y="20.9" width="6.400" height="1" fill="#a8b8d4" opacity="0.500"/><rect x="78.3" y="14.3" width="4.400" height="5" fill="#f4f0d0" opacity="0.920"/><rect x="77.3" y="20.9" width="6.400" height="1" fill="#a8b8d4" opacity="0.500"/><rect x="12.5" y="26.7" width="4.400" height="5" fill="#d8d890" opacity="0.920"/><rect x="11.5" y="33.3" width="6.400" height="1" fill="#a8b8d4" opacity="0.500"/><rect x="21.8" y="26.7" width="4.400" height="5" fill="#2a9be8" opacity="0.920"/><rect x="20.8" y="33.3" width="6.400" height="1" fill="#a8b8d4" opacity="0.500"/><rect x="31.3" y="26.7" width="4.400" height="5" fill="#e8f0fa" opacity="0.920"/><rect x="30.3" y="33.3" width="6.400" height="1" fill="#a8b8d4" opacity="0.500"/><rect x="40.8" y="26.7" width="4.400" height="5" fill="#3a70d8" opacity="0.920"/><rect x="39.8" y="33.3" width="6.400" height="1" fill="#a8b8d4" opacity="0.500"/><rect x="49.8" y="26.7" width="4.400" height="5" fill="#3a60c8" opacity="0.920"/><rect x="48.8" y="33.3" width="6.400" height="1" fill="#a8b8d4" opacity="0.500"/><rect x="59.5" y="26.7" width="4.400" height="5" fill="#3cc44b" opacity="0.920"/><rect x="58.5" y="33.3" width="6.400" height="1" fill="#a8b8d4" opacity="0.500"/><rect x="12.5" y="38.7" width="4.400" height="5" fill="#eef0f2" opacity="0.920"/><rect x="11.5" y="45.3" width="6.400" height="1" fill="#a8b8d4" opacity="0.500"/><rect x="31.3" y="38.7" width="4.400" height="5" fill="#eef0f2" opacity="0.920"/><rect x="30.3" y="45.3" width="6.400" height="1" fill="#a8b8d4" opacity="0.500"/><rect x="12.5" y="51.2" width="4.400" height="5" fill="#3cb44b" opacity="0.920"/><rect x="11.5" y="57.8" width="6.400" height="1" fill="#a8b8d4" opacity="0.500"/><rect x="31.3" y="51.2" width="4.400" height="5" fill="#3cb44b" opacity="0.920"/><rect x="30.3" y="57.8" width="6.400" height="1" fill="#a8b8d4" opacity="0.500"/><rect x="59.5" y="51.2" width="4.400" height="5" fill="#eef0f2" opacity="0.920"/><rect x="58.5" y="57.8" width="6.400" height="1" fill="#a8b8d4" opacity="0.500"/><rect x="68.8" y="51.2" width="4.400" height="5" fill="#eef0f2" opacity="0.920"/><rect x="67.8" y="57.8" width="6.400" height="1" fill="#a8b8d4" opacity="0.500"/><rect x="12.5" y="63.4" width="4.400" height="5" fill="#f0f0e0" opacity="0.920"/><rect x="11.5" y="70.0" width="6.400" height="1" fill="#a8b8d4" opacity="0.500"/><rect x="40.8" y="63.4" width="4.400" height="5" fill="#eef0f2" opacity="0.920"/><rect x="39.8" y="70.0" width="6.400" height="1" fill="#a8b8d4" opacity="0.500"/><rect x="12.5" y="75.7" width="4.400" height="5" fill="#5ab4f0" opacity="0.920"/><rect x="11.5" y="82.3" width="6.400" height="1" fill="#a8b8d4" opacity="0.500"/><rect x="59.5" y="75.7" width="4.400" height="5" fill="#eef0f2" opacity="0.920"/><rect x="58.5" y="82.3" width="6.400" height="1" fill="#a8b8d4" opacity="0.500"/><rect x="12.5" y="87.7" width="4.400" height="5" fill="#c8642c" opacity="0.920"/><rect x="11.5" y="94.3" width="6.400" height="1" fill="#a8b8d4" opacity="0.500"/><rect x="125.0" y="1.800" width="5" height="5.500" fill="#f4f0d0"/><rect x="124.0" y="8.800" width="7" height="1.200" fill="#b8c8e0" opacity="0.650"/><rect x="134.5" y="1.800" width="5" height="5.500" fill="#f4f0d0"/><rect x="133.5" y="8.800" width="7" height="1.200" fill="#b8c8e0" opacity="0.650"/><rect x="143.5" y="1.800" width="5" height="5.500" fill="#e8d48a"/><rect x="142.5" y="8.800" width="7" height="1.200" fill="#b8c8e0" opacity="0.650"/><rect x="153.0" y="1.800" width="5" height="5.500" fill="#f4f0d0"/><rect x="152.0" y="8.800" width="7" height="1.200" fill="#b8c8e0" opacity="0.650"/><rect x="171.5" y="1.800" width="5" height="5.500" fill="#e8f0fa"/><rect x="170.5" y="8.800" width="7" height="1.200" fill="#b8c8e0" opacity="0.650"/><rect x="181.0" y="1.800" width="5" height="5.500" fill="#3cb44b"/><rect x="180.0" y="8.800" width="7" height="1.200" fill="#b8c8e0" opacity="0.650"/><rect x="190.5" y="1.800" width="5" height="5.500" fill="#d8d48a"/><rect x="189.5" y="8.800" width="7" height="1.200" fill="#b8c8e0" opacity="0.650"/><rect x="190" y="14" width="5" height="5.500" fill="#f4f0d0"/><rect x="189" y="21" width="7" height="1.200" fill="#b8c8e0" opacity="0.650"/><rect x="87.500" y="38.500" width="5" height="5.500" fill="#eef0f2"/><rect x="86.500" y="45.500" width="7" height="1.200" fill="#b8c8e0" opacity="0.650"/><rect x="151.500" y="37.500" width="8" height="11" fill="#6a9ad0" opacity="0.450"/><rect x="153" y="38.500" width="5" height="5.500" fill="#d8dce4"/><rect x="96" y="2" width="7" height="2.600" fill="#e8a018" transform="rotate(-38 99 4)"/><rect x="180" y="102.500" width="20" height="3" fill="#f4f4f4"/><rect x="180" y="102" width="3.500" height="3.500" fill="#3cb44b"/><rect x="80" y="0" width="32" height="0.800" fill="#a8c8e0" opacity="0.700"/></svg></div>
<div class="abs" style="left:39px;top:415px;width:212px;text-align:center;color:#e6e6e6;font-size:14.4px;line-height:18px;font-family:'Liberation Sans',sans-serif">nrtymrDSxl.gif</div>
<div class="abs" style="left:40px;top:436px;width:210px;height:159px;background:#1e1f25;border-radius:5px"></div>
<div class="abs" style="left:-11px;top:436px;width:45px;height:159px;background:#1e1f25;border-radius:5px"></div>
<svg class="abs" style="left:0;top:82px" width="30" height="112" viewBox="0 0 30 112"><defs><linearGradient id="lt1" x1="0" y1="0" x2="0" y2="1"><stop offset="0" stop-color="#0a3a80"/><stop offset="0.400" stop-color="#0a6cc4"/><stop offset="1" stop-color="#0a86dc"/></linearGradient></defs><rect width="30" height="112" fill="url(#lt1)"/><path d="M0,52 L12,50 V76 L0,77Z M15,49.500 L30,47 V75 L15,76Z M0,80 L12,79.500 V100 L0,98Z M15,79 L30,78.500 V104 L15,100.500Z" fill="#38b4fa" opacity="0.850"/><path d="M12,50 V100 M15,49.500 V100.500" stroke="#e0f6ff" stroke-width="0.800"/><g fill="#e8eef4"><rect x="3" y="3" width="5" height="6"/><rect x="12" y="3" width="5" height="6" fill="#3cb44b"/><rect x="21" y="3" width="5" height="6" fill="#3cb44b"/></g><rect x="12" y="104" width="18" height="4" fill="#f4f4f4"/><rect x="12" y="104" width="4" height="4" fill="#3cb44b"/></svg>
<svg class="abs" style="left:0;top:270px" width="30" height="111" viewBox="0 0 30 111"><rect width="30" height="111" fill="#f4f4f2"/><rect x="0" y="0" width="30" height="4" fill="#ffffff"/><rect x="24" y="3" width="4" height="50" fill="#d8d8d8"/><rect x="0" y="106" width="30" height="5" fill="#e0e0e0"/><rect x="12" y="100" width="17" height="4" fill="#ececec"/><rect x="12" y="100" width="4" height="4" fill="#3cb44b"/><rect x="28" y="0" width="2" height="111" fill="#c0c0c0"/></svg>
<svg class="abs" style="left:128px;top:494px" width="33" height="40" viewBox="0 0 33 40"><path d="M0.500,0.500 H23 L32.500,10 V39.500 H0.500Z" fill="#f2f2f2" stroke="#d0d0d0"/><path d="M23,0.500 V10 H32.500Z" fill="#dcdcdc"/><rect x="4.500" y="14.500" width="23" height="22" fill="#fff" stroke="#9ab0c8"/><rect x="6" y="16" width="20" height="9" fill="#6ab0e8"/><path d="M6,25 L12,20 L18,24 L22,21 L26,25 V30 H6Z" fill="#3a8a48"/></svg>
</div>
<div id="ex">
<svg width="0" height="0" style="position:absolute"><defs>
<symbol id="sf" viewBox="0 0 14 16" preserveAspectRatio="none"><path d="M0.700,0.700 H11.500 V15.300 H0.700Z" fill="#fde49b" stroke="#f4c455" stroke-width="1"/><path d="M11.200,9.500 H13.300 V15.300 H11.200Z" fill="#fde49b" stroke="#f4c455" stroke-width="0.800"/></symbol>
<symbol id="ck" viewBox="0 0 8 8"><circle cx="4" cy="4" r="3.800" fill="#22b14c"/><path d="M2.200,4.100 L3.500,5.400 L5.900,2.800" fill="none" stroke="#fff" stroke-width="1.100"/></symbol>
<symbol id="xl" viewBox="0 0 14 16" preserveAspectRatio="none"><path d="M1.500,0.500 H10 L13.500,4 V14 A1.500,1.500 0 0 1 12,15.500 H1.500 A1.500,1.500 0 0 1 0,14 V2 A1.500,1.500 0 0 1 1.500,0.500Z" fill="#3cb44b"/><path d="M10,0.500 L13.500,4 H10Z" fill="#a4dfab"/><path d="M10.500,5.800 H5.500 A1.600,1.600 0 0 0 5.500,9 H8.500 A1.600,1.600 0 0 1 8.500,12.200 H3.500" fill="none" stroke="#fff" stroke-width="1.300" stroke-linecap="round"/></symbol>
<symbol id="rar" viewBox="0 0 17 16" preserveAspectRatio="none"><rect x="0" y="0" width="17" height="5.500" fill="#8a2fa0"/><rect x="0" y="5.500" width="17" height="5.500" fill="#2a4fc0"/><rect x="0" y="11" width="17" height="5" fill="#2c9a38"/><rect x="6.500" y="0" width="4" height="16" fill="#e8c21c"/><rect x="0" y="0" width="3" height="5.500" fill="#c8242c"/><rect x="13.500" y="0" width="3.500" height="5.500" fill="#c8242c"/><rect x="7" y="5" width="3" height="5" fill="#f4f4f4"/><rect x="6.500" y="11" width="4" height="5" fill="#d8641c"/><path d="M0,5.500 H17 M0,11 H17" stroke="#5a1a1a" stroke-width="0.600"/></symbol>
</defs></svg>
<div class="title">
<svg class="abs" style="left:11px;top:7px" width="14" height="16"><use href="#sf" width="14" height="16"/></svg>
<div class="sep" style="left:32px;top:9px;height:14px;background:#a0a0a0"></div>
<svg class="abs" style="left:43px;top:8px" width="13" height="16" viewBox="0 0 13 16"><path d="M0.500,0.500 H9 L12.500,4 V15.500 H0.500Z" fill="#fff" stroke="#8c8c8c"/><path d="M9,0.500 V4 H12.500" fill="none" stroke="#8c8c8c"/><path d="M3,8.500 L5.500,11.500 L10,5.500" fill="none" stroke="#e8501c" stroke-width="1.500"/></svg>
<svg class="abs" style="left:65px;top:8px" width="14" height="16"><use href="#sf" width="14" height="16"/></svg>
<svg class="abs" style="left:87px;top:13px" width="8" height="8" viewBox="0 0 8 8"><path d="M0.500,0.500 H7.500" stroke="#222" stroke-width="1"/><path d="M0.500,3 H7.500 L4,7Z" fill="#222"/></svg>
<div class="sep" style="left:102px;top:9px;height:14px;background:#a0a0a0"></div>
<div class="rt" style="left:110px;top:9px;color:#000">18. 调用脚本执行（有输入输出）</div>
<svg class="abs" style="left:855px;top:9px" width="110" height="14" viewBox="0 0 110 14"><path d="M0,6.500 H10" stroke="#000" stroke-width="1"/><rect x="46.500" y="1.500" width="9" height="9" fill="none" stroke="#000" stroke-width="1"/><path d="M92,1 L102,11 M102,1 L92,11" stroke="#000" stroke-width="1.100"/></svg>
</div>
<div class="tabs">
<div class="abs" style="left:0px;top:0;width:56px;height:23px;background:#1269bf;color:#fff;text-align:center;line-height:26px">文件</div>
<div class="abs" style="left:56px;top:0;width:53px;height:27px;background:#f5f6f7;border:1px solid #dadbdc;border-bottom:none;text-align:center;line-height:25px;z-index:2">主页</div>
<div class="abs" style="left:108px;top:0;width:54px;height:24px;text-align:center;line-height:27px">共享</div>
<div class="abs" style="left:161px;top:0;width:54px;height:24px;text-align:center;line-height:27px">查看</div>
<svg class="abs" style="left:936px;top:9px" width="10" height="7" viewBox="0 0 10 7"><path d="M1,6 L5,1.500 L9,6" fill="none" stroke="#7a7a7a" stroke-width="1.200"/></svg>
<svg class="abs" style="left:955.5px;top:5.5px" width="15" height="15" viewBox="0 0 15 15"><circle cx="7.500" cy="7.500" r="7" fill="#1e78d2"/><text x="7.500" y="11.500" font-size="11" font-weight="bold" fill="#fff" text-anchor="middle" font-family="Liberation Sans, sans-serif">?</text></svg>
</div>
<div class="ribbon">
<svg class="abs" style="left:20.0px;top:11.0px" width="24" height="24" viewBox="0 0 24 24"><g transform="rotate(42 12 12)" fill="#a4b6cc"><rect x="6.500" y="0" width="11" height="4" rx="1.300"/><rect x="8.300" y="4" width="7.400" height="7" fill="#b4c3d6"/><path d="M5,10.500 H19 V14 H5Z"/><path d="M10.800,14 H13.200 L12,24Z" fill="#93a5bc"/></g></svg>
<div class="rt c dis" style="left:2.0px;top:44.0px;width:60px;">固定到快</div>
<div class="rt c dis" style="left:2.0px;top:61.0px;width:60px;">速访问</div>
<svg class="abs" style="left:68.0px;top:9.0px" width="24" height="29" viewBox="0 0 24 29"><path d="M0.500,0.500 H11 L15.500,5 V20.500 H0.500Z" fill="#fff" stroke="#8c96a4"/><path d="M11,0.500 V5 H15.500" fill="none" stroke="#8c96a4"/><g stroke="#4a8fe0" stroke-width="1"><path d="M3,7.500 H13 M3,9.500 H13 M3,11.500 H13 M3,13.500 H13 M3,15.500 H13"/></g><path d="M8.500,8.500 H19 L23.500,13 V28.500 H8.500Z" fill="#fff" stroke="#8c96a4"/><path d="M19,8.500 V13 H23.500" fill="none" stroke="#8c96a4"/><g stroke="#4a8fe0" stroke-width="1"><path d="M11,15.500 H21 M11,17.500 H21 M11,19.500 H21 M11,21.500 H21 M11,23.500 H21 M11,25.500 H21"/></g></svg>
<div class="rt c " style="left:59.0px;top:44.0px;width:40px;">复制</div>
<svg class="abs" style="left:111.0px;top:7.0px" width="22" height="31" viewBox="0 0 22 31"><rect x="0.500" y="4.500" width="21" height="26" rx="1.500" fill="#6a4a36"/><rect x="3" y="7.500" width="16" height="21" fill="#fff"/><rect x="6" y="2" width="10" height="6" rx="1" fill="#9aa4b0"/><rect x="8.500" y="0.500" width="5" height="3" rx="1" fill="#7a8490"/><g stroke="#b4cdf0" stroke-width="1"><path d="M5,11.500 H17 M5,13.500 H17 M5,15.500 H17 M5,17.500 H17 M5,19.500 H17 M5,21.500 H17 M5,23.500 H17 M5,25.500 H17"/></g></svg>
<div class="rt c " style="left:101.0px;top:44.0px;width:40px;">粘贴</div>
<svg class="abs" style="left:105.0px;top:63.0px" width="14" height="16" viewBox="0 0 14 16"><path d="M3,0.500 L8.500,10 M11,0.500 L5.500,10" stroke="#6a7480" stroke-width="1.300"/><circle cx="3.500" cy="12.500" r="2.300" fill="none" stroke="#1e6fd0" stroke-width="1.500"/><circle cx="10.500" cy="12.500" r="2.300" fill="none" stroke="#1e6fd0" stroke-width="1.500"/></svg>
<div class="rt " style="left:123.0px;top:64.5px;">剪切</div>
<svg class="abs" style="left:154.0px;top:11.0px" width="15" height="10" viewBox="0 0 15 10"><rect x="0.500" y="0.500" width="14" height="9" fill="#d6e8fb" stroke="#9cc4ee"/><path d="M2,2.500 L4,7.500 M4.500,2.500 L6.500,7.500" fill="none" stroke="#1a2a50" stroke-width="1.300"/><path d="M8,7 H9.200 M10.200,7 H11.400 M12.400,7 H13.400" stroke="#1a2a50" stroke-width="1.300"/></svg>
<div class="rt " style="left:173.0px;top:8.0px;">复制路径</div>
<svg class="abs" style="left:155.0px;top:29.0px" width="14" height="16" viewBox="0 0 14 16"><rect x="0.500" y="2.500" width="13" height="13" rx="1" fill="#dfe6ee" stroke="#9aa8bc"/><rect x="4" y="0.500" width="6" height="3.500" fill="#b4c0d0"/><rect x="3" y="5.500" width="8" height="8" fill="#f6f8fa"/><path d="M5,12 V9 H8.500 V7.500 L10.500,9.500" fill="none" stroke="#7a90b4" stroke-width="1.200"/></svg>
<div class="rt dis" style="left:173.0px;top:30.0px;">粘贴快捷方式</div>
<div class="rt c grp" style="left:97.0px;top:88.5px;width:60px;">剪贴板</div>
<div class="sep" style="left:255.0px;top:2.0px;height:101.0px;background:#e2e3e4"></div>
<svg class="abs" style="left:269.0px;top:9.0px" width="27" height="29" viewBox="0 0 27 29"><path d="M0.500,0.500 H20 V4 H22.500 V28.500 H0.500Z" fill="#f7d572"/><path d="M0.500,0.500 H20 V28.500 H0.500Z" fill="#fbe08d"/><path d="M26,20 H17 V24 L9.500,18 L17,12 V16 H26Z" fill="#2a8be8"/></svg>
<div class="rt c " style="left:254.5px;top:44.0px;width:50px;">移动到</div>
<svg class="abs" style="left:276.5px;top:58.5px" width="6" height="4" viewBox="0 0 6 4"><path d="M0,0 H6 L3,3.500Z" fill="#222"/></svg>
<svg class="abs" style="left:312.0px;top:7.0px" width="27" height="31" viewBox="0 0 27 31"><path d="M0.500,3.500 H20 V7 H22.500 V30.500 H0.500Z" fill="#f7d572"/><path d="M0.500,3.500 H20 V30.500 H0.500Z" fill="#fbe08d"/><path d="M10.500,0.500 H17 L20.500,4 V13.500 H10.500Z" fill="#fff" stroke="#8c96a4"/><path d="M15.500,5.500 H22 L25.500,9 V19.500 H15.500Z" fill="#fff" stroke="#8c96a4"/><g stroke="#4a8fe0" stroke-width="1"><path d="M17.500,10.500 H23.500 M17.500,12.500 H23.500 M17.500,14.500 H23.500 M17.500,16.500 H23.500"/></g></svg>
<div class="rt c " style="left:296.5px;top:44.0px;width:50px;">复制到</div>
<svg class="abs" style="left:318.5px;top:58.5px" width="6" height="4" viewBox="0 0 6 4"><path d="M0,0 H6 L3,3.500Z" fill="#222"/></svg>
<div class="sep" style="left:348.5px;top:15.0px;height:54.0px;background:#e2e3e4"></div>
<svg class="abs" style="left:360.0px;top:11.0px" width="26" height="25" viewBox="0 0 26 25"><path d="M2,2 L24,23 M24,2 L2,23" stroke="#e0201c" stroke-width="4.200"/></svg>
<div class="rt c " style="left:352.5px;top:44.5px;width:40px;">删除</div>
<svg class="abs" style="left:369.5px;top:59.0px" width="6" height="4" viewBox="0 0 6 4"><path d="M0,0 H6 L3,3.500Z" fill="#222"/></svg>
<svg class="abs" style="left:401.0px;top:9.0px" width="29" height="27" viewBox="0 0 29 27"><rect x="0.500" y="8.500" width="25" height="12" fill="#fff" stroke="#8c96a4"/><rect x="3" y="11" width="13" height="7" fill="#2a8be8"/><path d="M21.500,2 V25 M17,1 C19.500,1 21.500,1.500 21.500,3 C21.500,1.500 23.500,1 26,1 M17,26 C19.500,26 21.500,25.500 21.500,24 C21.500,25.500 23.500,26 26,26" fill="none" stroke="#444" stroke-width="1.500"/></svg>
<div class="rt c " style="left:388.5px;top:44.0px;width:50px;">重命名</div>
<div class="sep" style="left:442.0px;top:2.0px;height:101.0px;background:#e2e3e4"></div>
<svg class="abs" style="left:456.0px;top:10.0px" width="20" height="28" viewBox="0 0 20 28"><path d="M1,1.500 L13,0.500 L15,3 L19.500,4 V22 L8,27.500 L1,23Z" fill="#f4cc62"/><path d="M1,1.500 L8,5 V27.500 L1,23Z" fill="#fbe08d"/><path d="M8,5 L19.500,4 V22 L8,27.500Z" fill="#f8d878"/></svg>
<div class="rt c " style="left:441.5px;top:44.0px;width:50px;">新建</div>
<div class="rt c " style="left:441.5px;top:61.0px;width:50px;">文件夹</div>
<svg class="abs" style="left:492.0px;top:7.0px" width="17" height="17" viewBox="0 0 17 17"><rect x="0.500" y="0.500" width="9" height="8" fill="#fff" stroke="#5a7aa4"/><rect x="2" y="2" width="6" height="2" fill="#2a8be8"/><rect x="4.500" y="4.500" width="8" height="8" fill="#fff" stroke="#8c96a4"/><rect x="8.500" y="7.500" width="8" height="9" fill="#fff" stroke="#8c96a4"/><path d="M10,10.500 H15 M10,12.500 H15 M10,14.500 H15" stroke="#b4bcc8" stroke-width="1"/></svg>
<div class="rt " style="left:511.0px;top:8.0px;">新建项目</div>
<svg class="abs" style="left:563.5px;top:13.5px" width="6" height="4" viewBox="0 0 6 4"><path d="M0,0 H6 L3,3.500Z" fill="#222"/></svg>
<svg class="abs" style="left:492.0px;top:28.0px" width="17" height="17" viewBox="0 0 17 17"><path d="M4.500,2.500 H11 L14.500,6 V16.500 H4.500Z" fill="#fff" stroke="#6a7480"/><path d="M11,2.500 V6 H14.500" fill="none" stroke="#6a7480"/><path d="M0,6.500 H5 M1.500,9 H6 M3,4 V11" stroke="#2a62b8" stroke-width="1.100"/></svg>
<div class="rt " style="left:511.0px;top:30.0px;">轻松访问</div>
<svg class="abs" style="left:563.5px;top:35.5px" width="6" height="4" viewBox="0 0 6 4"><path d="M0,0 H6 L3,3.500Z" fill="#222"/></svg>
<div class="rt c grp" style="left:484.5px;top:88.5px;width:50px;">新建</div>
<div class="sep" style="left:579.5px;top:2.0px;height:101.0px;background:#e2e3e4"></div>
<svg class="abs" style="left:593.0px;top:9.0px" width="23" height="29" viewBox="0 0 23 29"><path d="M0.500,0.500 H16 L22.500,7 V28.500 H0.500Z" fill="#fff" stroke="#8c8c8c"/><path d="M16,0.500 V7 H22.500" fill="none" stroke="#8c8c8c"/><path d="M5,15 L9.500,20.500 L18,10.500" fill="none" stroke="#e8501c" stroke-width="2.400"/></svg>
<div class="rt c " style="left:584.0px;top:45.0px;width:40px;">属性</div>
<svg class="abs" style="left:601.0px;top:59.5px" width="6" height="4" viewBox="0 0 6 4"><path d="M0,0 H6 L3,3.500Z" fill="#222"/></svg>
<svg class="abs" style="left:630.0px;top:10.0px" width="14" height="15" viewBox="0 0 14 16"><use href="#xl" width="14" height="16"/></svg>
<div class="rt " style="left:648.0px;top:10.5px;">打开</div>
<svg class="abs" style="left:676.5px;top:16.0px" width="6" height="4" viewBox="0 0 6 4"><path d="M0,0 H6 L3,3.500Z" fill="#222"/></svg>
<svg class="abs" style="left:630.0px;top:34.0px" width="15" height="17" viewBox="0 0 15 17"><path d="M0.500,0.500 H9 L12.500,4 V16.500 H0.500Z" fill="#f4f8fc" stroke="#c0cce0"/><path d="M4,13 L11.500,4 L13.500,5.500 L6,14.500 L3.500,15Z" fill="#d0dcf0" stroke="#a8b8d8" stroke-width="0.700"/></svg>
<div class="rt dis" style="left:648.0px;top:36.0px;">编辑</div>
<svg class="abs" style="left:629.0px;top:59.0px" width="18" height="17" viewBox="0 0 18 17"><path d="M0.500,0.500 H10 V12.500 H0.500Z" fill="#f7d572"/><circle cx="11.500" cy="10.500" r="5.500" fill="#f4f4f4" stroke="#8a8a8a"/><path d="M11.500,7 V10.500 L14,12" fill="none" stroke="#555" stroke-width="1"/><path d="M2,11 C4,7 7,8 8,10 L9.500,8.500 L9.500,13.500 L4.500,13 L6,11.800 C5,10.500 3.500,10.500 2,11Z" fill="#22a040"/></svg>
<div class="rt " style="left:648.0px;top:61.0px;">历史记录</div>
<div class="rt c grp" style="left:616.5px;top:88.5px;width:50px;">打开</div>
<div class="sep" style="left:706.0px;top:2.0px;height:101.0px;background:#e2e3e4"></div>
<svg class="abs" style="left:714.0px;top:7.0px" width="15" height="15" viewBox="0 0 15 15"><g fill="#bfe0fb" stroke="#2a8be8" stroke-width="1"><rect x="0.500" y="0.500" width="6" height="6"/><rect x="8.500" y="0.500" width="6" height="6"/><rect x="0.500" y="8.500" width="6" height="6"/><rect x="8.500" y="8.500" width="6" height="6"/></g></svg>
<div class="rt " style="left:733.0px;top:8.0px;">全部选择</div>
<svg class="abs" style="left:714.0px;top:29.0px" width="15" height="15" viewBox="0 0 15 15"><g fill="#fff" stroke="#a0a0a0" stroke-width="1"><rect x="1" y="1" width="5" height="5"/><rect x="9" y="1" width="5" height="5"/><rect x="1" y="9" width="5" height="5"/><rect x="9" y="9" width="5" height="5"/></g></svg>
<div class="rt " style="left:733.0px;top:30.0px;">全部取消</div>
<svg class="abs" style="left:714.0px;top:51.0px" width="15" height="15" viewBox="0 0 15 15"><g stroke-width="1"><rect x="1" y="1" width="5" height="5" fill="#fff" stroke="#a0a0a0"/><rect x="8.500" y="0.500" width="6" height="6" fill="#bfe0fb" stroke="#2a8be8"/><rect x="0.500" y="8.500" width="6" height="6" fill="#bfe0fb" stroke="#2a8be8"/><rect x="9" y="9" width="5" height="5" fill="#fff" stroke="#a0a0a0"/></g></svg>
<div class="rt " style="left:733.0px;top:52.0px;">反向选择</div>
<div class="rt c grp" style="left:722.0px;top:88.5px;width:50px;">选择</div>
<div class="sep" style="left:791.5px;top:2.0px;height:101.0px;background:#e2e3e4"></div>
</div>
<svg class="abs" style="left:13.0px;top:176.0px" width="15" height="12" viewBox="0 0 15 12"><path d="M14.500,6 H1.500 M6.500,1 L1.500,6 L6.500,11" fill="none" stroke="#555" stroke-width="1.400"/></svg>
<svg class="abs" style="left:43.0px;top:176.0px" width="15" height="12" viewBox="0 0 15 12"><path d="M0.500,6 H13.500 M8.500,1 L13.500,6 L8.500,11" fill="none" stroke="#c4c4c4" stroke-width="1.400"/></svg>
<svg class="abs" style="left:69.5px;top:180.0px" width="7" height="5" viewBox="0 0 7 5"><path d="M0.500,0.500 L3.500,3.800 L6.500,0.500" fill="none" stroke="#777" stroke-width="1.100"/></svg>
<svg class="abs" style="left:88.0px;top:175.0px" width="12" height="14" viewBox="0 0 12 14"><path d="M6,13.500 V1.500 M1,6.500 L6,1.500 L11,6.500" fill="none" stroke="#555" stroke-width="1.400"/></svg>
<div class="abs" style="left:107px;top:171px;width:746px;height:23px;border:1px solid #d9d9d9;background:#fff"></div>
<div class="sep" style="left:835px;top:172px;height:21px;background:#d9d9d9"></div>
<svg class="abs" style="left:112.0px;top:174.0px" width="13" height="16" viewBox="0 0 14 16"><use href="#sf" width="14" height="16"/></svg>
<div class="rt" style="left:149.0px;top:175.5px;color:#000;">此电脑</div>
<div class="rt" style="left:210.0px;top:175.5px;color:#000;">软件 (E:)</div>
<div class="rt" style="left:281.0px;top:175.5px;color:#000;">Seafile</div>
<div class="rt" style="left:344.0px;top:175.5px;color:#000;">私人资料库</div>
<div class="rt" style="left:429.0px;top:175.5px;color:#000;">个人研究</div>
<div class="rt" style="left:502.0px;top:175.5px;color:#000;">批量发消息</div>
<div class="rt" style="left:587.0px;top:175.5px;color:#000;">18. 调用脚本执行（有输入输出）</div>
<svg class="abs" style="left:133.5px;top:178.5px" width="5" height="8" viewBox="0 0 5 8"><path d="M0.800,0.800 L4,4 L0.800,7.200" fill="none" stroke="#666" stroke-width="1.100"/></svg>
<svg class="abs" style="left:194.5px;top:178.5px" width="5" height="8" viewBox="0 0 5 8"><path d="M0.800,0.800 L4,4 L0.800,7.200" fill="none" stroke="#666" stroke-width="1.100"/></svg>
<svg class="abs" style="left:265.5px;top:178.5px" width="5" height="8" viewBox="0 0 5 8"><path d="M0.800,0.800 L4,4 L0.800,7.200" fill="none" stroke="#666" stroke-width="1.100"/></svg>
<svg class="abs" style="left:328.5px;top:178.5px" width="5" height="8" viewBox="0 0 5 8"><path d="M0.800,0.800 L4,4 L0.800,7.200" fill="none" stroke="#666" stroke-width="1.100"/></svg>
<svg class="abs" style="left:413.5px;top:178.5px" width="5" height="8" viewBox="0 0 5 8"><path d="M0.800,0.800 L4,4 L0.800,7.200" fill="none" stroke="#666" stroke-width="1.100"/></svg>
<svg class="abs" style="left:486.5px;top:178.5px" width="5" height="8" viewBox="0 0 5 8"><path d="M0.800,0.800 L4,4 L0.800,7.200" fill="none" stroke="#666" stroke-width="1.100"/></svg>
<svg class="abs" style="left:571.5px;top:178.5px" width="5" height="8" viewBox="0 0 5 8"><path d="M0.800,0.800 L4,4 L0.800,7.200" fill="none" stroke="#666" stroke-width="1.100"/></svg>
<svg class="abs" style="left:822.0px;top:179.0px" width="10" height="7" viewBox="0 0 10 7"><path d="M1,1 L5,5.500 L9,1" fill="none" stroke="#444" stroke-width="1.500"/></svg>
<svg class="abs" style="left:838.0px;top:175.0px" width="13" height="14" viewBox="0 0 13 14"><path d="M10.500,4.500 A4.800,4.800 0 1 0 11.300,8.500" fill="none" stroke="#666" stroke-width="1.300"/><path d="M7.500,4.800 H11 V1.200" fill="none" stroke="#666" stroke-width="1.300"/></svg>
<div class="abs" style="left:865px;top:171px;width:98px;height:23px;border:1px solid #d9d9d9;background:#fff"></div>
<div class="rt" style="left:875.0px;top:175.5px;color:#6d6d6d;">搜索"18. ...</div>
<svg class="abs" style="left:942.0px;top:176.0px" width="13" height="13" viewBox="0 0 13 13"><circle cx="8" cy="5" r="3.600" fill="none" stroke="#555" stroke-width="1.400"/><path d="M5.500,7.500 L1,12" stroke="#555" stroke-width="1.600"/></svg>
<div class="abs" style="left:159px;top:200px;width:1px;height:565px;background:#f0f0f0"></div>
<div class="abs" style="left:1px;top:545px;width:156px;height:22px;background:#d9d9d9"></div>
<svg class="abs" style="left:26px;top:221px" width="17" height="16" viewBox="0 0 17 16"><path d="M9,1.500 L11,6 L16,6.500 L12.300,9.800 L13.400,14.500 L9,12 L4.600,14.500 L5.700,9.800 L2,6.500 L7,6Z" fill="#2a8be8"/><path d="M0,8.500 H4 M0.500,11 H3.500 M1,13.500 H4" stroke="#2a62b8" stroke-width="1"/></svg>
<div class="rt" style="left:46px;top:221.5px;color:#000;">快速访问</div>
<svg class="abs" style="left:33px;top:245px" width="17" height="16" viewBox="0 0 17 16"><rect x="0.500" y="2.500" width="16" height="11" fill="#1e78d8" stroke="#2a8be8"/><rect x="1" y="11.500" width="15" height="2" fill="#1450a0"/><path d="M2,12.500 H15" stroke="#d0e4f8" stroke-width="0.800" stroke-dasharray="1 1"/></svg>
<div class="rt" style="left:54px;top:245.5px;color:#000;">桌面</div>
<svg class="abs" style="left:143.0px;top:247.0px" width="11" height="11" viewBox="0 0 11 11"><path d="M6.500,0.500 L10.500,4.500 L9,5 L7,7 L6.800,9 L4.500,6.800 L1,10 L4.200,6.500 L2,4.200 L4,4 L6,2Z" fill="#8a8a8a"/></svg>
<svg class="abs" style="left:33px;top:269px" width="17" height="16" viewBox="0 0 17 16"><use href="#sf" x="2" y="0" width="14" height="16"/><use href="#ck" x="0" y="8" width="8" height="8"/></svg>
<div class="rt" style="left:54px;top:269.5px;color:#000;width:105px;overflow:hidden">18. 调用脚本执行（</div>
<svg class="abs" style="left:33px;top:293px" width="17" height="16" viewBox="0 0 17 16"><use href="#sf" x="2" y="0" width="14" height="16"/></svg>
<div class="rt" style="left:54px;top:293.5px;color:#000;">ahk</div>
<svg class="abs" style="left:33px;top:317px" width="17" height="16" viewBox="0 0 17 16"><use href="#sf" x="2" y="0" width="14" height="16"/></svg>
<div class="rt" style="left:54px;top:317.5px;color:#000;">脚本文件</div>
<svg class="abs" style="left:33px;top:341px" width="17" height="16" viewBox="0 0 17 16"><use href="#sf" x="2" y="0" width="14" height="16"/></svg>
<div class="rt" style="left:54px;top:341.5px;color:#000;">配置文件</div>
<svg class="abs" style="left:26px;top:373px" width="17" height="16" viewBox="0 0 17 16"><path d="M4.500,13 C1.500,13 0.500,9.500 3.500,8.500 C3.500,5 8,3.500 10,6.500 C13,5.500 16,7.500 15.500,10.500 C15.200,12.500 13.500,13 12.500,13Z" fill="#fff" stroke="#2a8be8" stroke-width="1.500"/></svg>
<div class="rt" style="left:46px;top:373.5px;color:#000;">WPS网盘</div>
<svg class="abs" style="left:26px;top:405px" width="17" height="16" viewBox="0 0 17 16"><rect x="0.500" y="2.500" width="16" height="9.500" fill="#dfe9f2" stroke="#8a9ab0"/><rect x="1.500" y="3.500" width="14" height="7" fill="#48b4f4"/><path d="M4,14.800 H13 M8.500,12.500 V14.500" stroke="#7a8aa0" stroke-width="1.300"/></svg>
<div class="rt" style="left:46px;top:405.5px;color:#000;">此电脑</div>
<svg class="abs" style="left:33px;top:429px" width="17" height="16" viewBox="0 0 17 16"><path d="M3.500,0.500 H11 L14.500,4 V15.500 H3.500Z" fill="#fff" stroke="#6a7480"/><path d="M11,0.500 V4 H14.500" fill="none" stroke="#6a7480"/><path d="M5.500,6.500 H12.500 M5.500,8.500 H12.500 M5.500,10.500 H12.500 M5.500,12.500 H10" stroke="#7a9ac8" stroke-width="1"/></svg>
<div class="rt" style="left:54px;top:429.5px;color:#000;">文档</div>
<svg class="abs" style="left:33px;top:453px" width="17" height="16" viewBox="0 0 17 16"><path d="M6,1 H11 V7.500 H15 L8.500,14.500 L2,7.500 H6Z" fill="#2a8be8"/></svg>
<div class="rt" style="left:54px;top:453.5px;color:#000;">下载</div>
<svg class="abs" style="left:33px;top:477px" width="17" height="16" viewBox="0 0 17 16"><rect x="0.500" y="2.500" width="16" height="11" fill="#1e78d8" stroke="#2a8be8"/><rect x="1" y="11.500" width="15" height="2" fill="#1450a0"/><path d="M2,12.500 H15" stroke="#d0e4f8" stroke-width="0.800" stroke-dasharray="1 1"/></svg>
<div class="rt" style="left:54px;top:477.5px;color:#000;">桌面</div>
<svg class="abs" style="left:33px;top:501px" width="17" height="16" viewBox="0 0 17 16"><path d="M5.500,8 H13.500 L16,10.500 H3Z" fill="#d4d4d4"/><rect x="3" y="10.500" width="13" height="4" rx="0.500" fill="#4e4e4e"/><rect x="3" y="10.500" width="13" height="1" fill="#8a8a8a"/><rect x="12.500" y="12.200" width="2" height="1.200" fill="#3ae03a"/><path d="M0.500,1.500 H3 V4 H0.500Z M3.800,1.500 H6.300 V4 H3.800Z M0.500,4.800 H3 V7.300 H0.500Z M3.800,4.800 H6.300 V7.300 H3.800Z" fill="#2aa4f0"/></svg>
<div class="rt" style="left:54px;top:501.5px;color:#000;width:104px;overflow:hidden;letter-spacing:0.3px">Win 10 Pro x64 (C</div>
<svg class="abs" style="left:33px;top:525px" width="17" height="16" viewBox="0 0 17 16"><path d="M3.500,7 H13.500 L16,10.500 H1Z" fill="#d4d4d4"/><rect x="1" y="10.500" width="15" height="4" rx="0.500" fill="#4e4e4e"/><rect x="1" y="10.500" width="15" height="1" fill="#8a8a8a"/><rect x="12.500" y="12.200" width="2" height="1.200" fill="#3ae03a"/></svg>
<div class="rt" style="left:54px;top:525.5px;color:#000;">系统 (D:)</div>
<svg class="abs" style="left:33px;top:549px" width="17" height="16" viewBox="0 0 17 16"><path d="M3.500,7 H13.500 L16,10.500 H1Z" fill="#d4d4d4"/><rect x="1" y="10.500" width="15" height="4" rx="0.500" fill="#4e4e4e"/><rect x="1" y="10.500" width="15" height="1" fill="#8a8a8a"/><rect x="12.500" y="12.200" width="2" height="1.200" fill="#3ae03a"/></svg>
<div class="rt" style="left:54px;top:549.5px;color:#000;">软件 (E:)</div>
<svg class="abs" style="left:33px;top:573px" width="17" height="16" viewBox="0 0 17 16"><path d="M4,2.500 H13 L15,5 H2Z" fill="#d4d4d4"/><rect x="2" y="5" width="13" height="3.500" fill="#4e4e4e"/><rect x="2" y="5" width="13" height="1" fill="#8a8a8a"/><rect x="11.500" y="6.500" width="2" height="1.200" fill="#3ae03a"/><path d="M8.500,8 V11 M1,12.500 H16" stroke="#2c9a38" stroke-width="1.500"/><rect x="6" y="10.500" width="5" height="3.500" fill="#2c9a38"/><path d="M12,2 L14,4 M14,2 L12,4" stroke="#2c9a38" stroke-width="1"/></svg>
<div class="rt" style="left:54px;top:573.5px;color:#000;width:104px;overflow:hidden;letter-spacing:0.38px">e (\\192.168.7.61)</div>
<svg class="abs" style="left:26px;top:605px" width="17" height="16" viewBox="0 0 17 16"><rect x="5.500" y="1.500" width="10" height="7" fill="#5cc0f8" stroke="#5a7aa4"/><rect x="1.500" y="5.500" width="10" height="7" fill="#3aa4ec" stroke="#5a7aa4"/><path d="M4,15 H9 M6.500,13 V15" stroke="#5a7aa4" stroke-width="1.200"/></svg>
<div class="rt" style="left:46px;top:605.5px;color:#000;">网络</div>
<div class="sep" style="left:433.0px;top:201px;height:26px;background:#e5e5e5"></div>
<div class="sep" style="left:552.5px;top:201px;height:26px;background:#e5e5e5"></div>
<div class="sep" style="left:672.5px;top:201px;height:26px;background:#e5e5e5"></div>
<div class="sep" style="left:752.0px;top:201px;height:26px;background:#e5e5e5"></div>
<div class="rt" style="left:178.0px;top:207.5px;color:#4c607a;">名称</div>
<div class="rt" style="left:439.0px;top:207.5px;color:#4c607a;">修改日期</div>
<div class="rt" style="left:559.0px;top:207.5px;color:#4c607a;">类型</div>
<div class="rt" style="left:679.0px;top:207.5px;color:#4c607a;">大小</div>
<svg class="abs" style="left:297.5px;top:201.0px" width="9" height="6" viewBox="0 0 9 6"><path d="M1,5 L4.500,1.200 L8,5" fill="none" stroke="#8a8a8a" stroke-width="1"/></svg>
<div class="row" style="top:234px;"><svg width="15" height="17" viewBox="0 0 15 17" style="left:4px;top:2px"><use href="#sf" x="1.500" y="0" width="13" height="16"/><use href="#ck" x="0" y="8.500" width="8" height="8"/></svg><span class="n">辅助文件夹</span><span class="d">2021/8/25 10:08</span><span class="t">文件夹</span><span class="s"></span></div>
<div class="row" style="top:255px;"><svg width="15" height="17" viewBox="0 0 15 17" style="left:4px;top:2px"><use href="#sf" x="1.500" y="0" width="13" height="16"/><use href="#ck" x="0" y="8.500" width="8" height="8"/></svg><span class="n">生成文件夹</span><span class="d">2021/7/27 16:31</span><span class="t">文件夹</span><span class="s"></span></div>
<div class="row" style="top:276px;"><svg width="15" height="17" viewBox="0 0 15 17" style="left:4px;top:2px"><use href="#sf" x="1.500" y="0" width="13" height="16"/><use href="#ck" x="0" y="8.500" width="8" height="8"/></svg><span class="n">原来可用文件</span><span class="d">2021/8/25 19:51</span><span class="t">文件夹</span><span class="s"></span></div>
<div class="row" style="top:297px;"><svg width="17" height="17" viewBox="0 0 17 17" style="left:4px;top:2px"><use href="#rar" x="0" y="0" width="17" height="16"/><use href="#ck" x="0" y="8.500" width="8" height="8"/></svg><span class="n">18.调用脚本执行（有输入输出）.rar</span><span class="d">2021/7/27 16:32</span><span class="t">WinRAR 压缩文件</span><span class="s">1,924 KB</span></div>
<div class="row" style="top:318px;"><svg width="15" height="17" viewBox="0 0 15 17" style="left:4px;top:2px"><use href="#xl" x="1.500" y="0" width="13" height="15.500"/><use href="#ck" x="0" y="8.500" width="8" height="8"/></svg><span class="n">表格同步 - 副本.xlsm</span><span class="d">2021/8/27 8:23</span><span class="t">XLSM 文件</span><span class="s">50 KB</span></div>
<div class="row" style="top:339px;background:#cce8ff;box-shadow:inset 0 0 0 1px #99d1ff;"><svg width="15" height="17" viewBox="0 0 15 17" style="left:4px;top:2px"><use href="#xl" x="1.500" y="0" width="13" height="15.500"/><use href="#ck" x="0" y="8.500" width="8" height="8"/></svg><span class="n">表格同步.xlsm</span><span class="d">2021/8/27 9:45</span><span class="t">XLSM 文件</span><span class="s">50 KB</span></div>
<div class="row" style="top:360px;"><svg width="15" height="17" viewBox="0 0 15 17" style="left:4px;top:2px"><use href="#xl" x="1.500" y="0" width="13" height="15.500"/><use href="#ck" x="0" y="8.500" width="8" height="8"/></svg><span class="n">身份证解析2.xlsm</span><span class="d">2021/8/25 15:43</span><span class="t">XLSM 文件</span><span class="s">53 KB</span></div>
<div class="row" style="top:381px;"><svg width="17" height="17" viewBox="0 0 17 17" style="left:4px;top:2px"><use href="#rar" x="0" y="0" width="17" height="16"/><use href="#ck" x="0" y="8.500" width="8" height="8"/></svg><span class="n">调用外部脚本（可用）.rar</span><span class="d">2021/8/1 9:09</span><span class="t">WinRAR 压缩文件</span><span class="s">50 KB</span></div>
<div class="row" style="top:402px;"><svg width="15" height="17" viewBox="0 0 15 17" style="left:4px;top:2px"><use href="#xl" x="1.500" y="0" width="13" height="15.500"/><use href="#ck" x="0" y="8.500" width="8" height="8"/></svg><span class="n">调用外部脚本（可用）.xlsm</span><span class="d">2021/8/25 19:52</span><span class="t">XLSM 文件</span><span class="s">55 KB</span></div>
<div class="row" style="top:423px;"><svg width="15" height="17" viewBox="0 0 15 17" style="left:4px;top:2px"><use href="#xl" x="1.500" y="0" width="13" height="15.500"/><use href="#ck" x="0" y="8.500" width="8" height="8"/></svg><span class="n">文字转拼音.xlsm</span><span class="d">2021/8/25 15:59</span><span class="t">XLSM 文件</span><span class="s">53 KB</span></div>
<div class="row" style="top:444px;"><svg width="15" height="17" viewBox="0 0 15 17" style="left:4px;top:2px"><use href="#xl" x="1.500" y="0" width="13" height="15.500"/><use href="#ck" x="0" y="8.500" width="8" height="8"/></svg><span class="n">智能地址解析.xlsm</span><span class="d">2021/8/25 10:04</span><span class="t">XLSM 文件</span><span class="s">54 KB</span></div>
<div class="row" style="top:465px;"><svg width="15" height="17" viewBox="0 0 15 17" style="left:4px;top:2px"><use href="#xl" x="1.500" y="0" width="13" height="15.500"/><use href="#ck" x="0" y="8.500" width="8" height="8"/></svg><span class="n">最新_调用脚本执行（有输入输出）.xlsm</span><span class="d">2021/8/25 19:52</span><span class="t">XLSM 文件</span><span class="s">55 KB</span></div>
<svg class="abs" style="left:234.0px;top:349.0px" width="13" height="20" viewBox="0 0 13 20"><path d="M1,1 V16 L4.500,12.800 L7,18.500 L9.500,17.400 L7,11.800 L11.800,11.800Z" fill="#fff" stroke="#000" stroke-width="1"/></svg>
<div class="rt" style="left:15.0px;top:767.7px;color:#1e3a6e;">12 个项目</div>
<div class="rt" style="left:90.0px;top:767.7px;color:#1e3a6e;">选中 1 个项目&nbsp; 49.4 KB</div>
<div class="sep" style="left:79px;top:769px;height:13px;background:#f0f0f0"></div>
<div class="sep" style="left:226px;top:769px;height:13px;background:#f0f0f0"></div>
<div class="abs" style="left:927px;top:764px;width:22px;height:23px;background:#cce4f7;border:1px solid #1a8cf0"></div>
<svg class="abs" style="left:931.0px;top:769.0px" width="17" height="13" viewBox="0 0 17 13"><rect x="0.500" y="0.500" width="4" height="12" fill="#fff" stroke="#8a8a8a"/><path d="M0.500,4.500 H4.500 M0.500,8.500 H4.500" stroke="#8a8a8a" stroke-width="1"/><rect x="2" y="2" width="1" height="1" fill="#444"/><rect x="2" y="6" width="1" height="1" fill="#4a9ae8"/><rect x="2" y="10" width="1" height="1" fill="#e82020"/><path d="M6,2.500 H10 M12,2.500 H16 M6,6.500 H10 M12,6.500 H16 M6,10.500 H10 M12,10.500 H16" stroke="#707070" stroke-width="1"/></svg>
<svg class="abs" style="left:953.0px;top:769.0px" width="14" height="12" viewBox="0 0 14 12"><rect x="0.500" y="0.500" width="13" height="10" fill="#fff" stroke="#8a8a8a"/><rect x="2" y="2" width="10" height="7" fill="#3a8fd0"/><path d="M2,9 L5,5.500 L7.500,8 L9.500,6.500 L12,9Z" fill="#2c7a38"/></svg>
</div>
<div id="tb">
<div class="act"></div><div class="abs" style="left:78px;top:184px;width:3px;height:46px;background:#25282d"></div>
<div class="ind" style="top:47px"></div><div class="ind" style="top:94px"></div><div class="ind" style="top:141px"></div>
<div class="ind" style="top:184px;height:46px"></div>
<div class="ind" style="top:235px"></div><div class="ind" style="top:282px"></div><div class="ind" style="top:329px"></div><div class="ind" style="top:376px"></div>
<!-- start -->
<svg class="abs" style="left:32px;top:12px" width="17" height="17" viewBox="0 0 17 17"><path fill="#fff" d="M0,2.4 L7,1.4 V8 H0Z M8,1.2 L17,0 V8 H8Z M0,9 H7 V15.6 L0,14.6Z M8,9 H17 V17 L8,15.8Z"/></svg>
<!-- edge -->
<svg class="abs" style="left:27px;top:53px" width="26" height="26" viewBox="0 0 26 26"><defs><linearGradient id="eg1" x1="0" y1="0" x2="1" y2="0.3"><stop offset="0" stop-color="#2aa0e8"/><stop offset="0.55" stop-color="#36c0b0"/><stop offset="1" stop-color="#6fd86a"/></linearGradient><linearGradient id="eg2" x1="0" y1="0" x2="0.6" y2="1"><stop offset="0" stop-color="#1a8fe0"/><stop offset="1" stop-color="#1c4fa8"/></linearGradient></defs><circle cx="13" cy="13" r="12" fill="url(#eg2)"/><path d="M1.2,12 A12,12 0 0 1 25,11 C25,16 21,17.5 17,17 C14.5,16.5 14,14.5 15,13 C11,8.5 3,9.5 1.2,12Z" fill="url(#eg1)"/><path d="M15,13 C12,13 10,15 10.5,18 C11,21.5 15,24 20,22.5 C22,21.8 23.5,20 24.5,18 C22,19.5 17,19.5 15.2,16.5 C14.5,15.2 14.6,14 15,13Z" fill="#0b0e13"/><circle cx="14.2" cy="14" r="2.6" fill="#0b0e13"/></svg>
<!-- colourful swirl -->
<svg class="abs" style="left:28px;top:101px" width="24" height="24" viewBox="0 0 24 24"><circle cx="12" cy="12" r="11.5" fill="#e53b2c"/><path d="M12,0.5 A11.5,11.5 0 0 1 23.5,12 A11.5,11.5 0 0 1 14,23.3 C19,19 19,9 12,7 C7,6 3,8 1,10 A11.5,11.5 0 0 1 12,0.5Z" fill="#2f8be6"/><path d="M14,1 A11.5,11.5 0 0 1 23.5,12 A11.5,11.5 0 0 1 16,22.8 C17.5,17 17,12 14.5,9 C16,7 16,3 14,1Z" fill="#2ea23a"/><path d="M5,14 C6,20 13,21.5 17,18 C20,16 22,14 23.4,13 A11.5,11.5 0 0 1 8,22.8 C5.5,20.5 4.5,17 5,14Z" fill="#f7c21a"/><circle cx="12.2" cy="12" r="4.1" fill="#0b0e13"/></svg>
<!-- cloud -->
<svg class="abs" style="left:28px;top:148px" width="24" height="24" viewBox="0 0 24 24"><circle cx="12" cy="12" r="11.5" fill="#f3a83a"/><circle cx="12" cy="12" r="10" fill="none" stroke="#f8cf8a" stroke-width="1"/><path d="M5,13.5 C5,11.5 7,10.5 8.5,11 C9,8.5 12.5,7.5 14,10 C16.5,9.2 19,11 18.5,13.5 C18,15.5 16,15.8 14.5,15.5 H7.5 C6,15.5 5,14.8 5,13.5Z" fill="#fff"/><path d="M8,13.2 C10,11.5 12,14.5 15,12.5" stroke="#f3a83a" stroke-width="1.2" fill="none"/></svg>
<!-- explorer -->
<svg class="abs" style="left:29px;top:197px" width="22" height="19" viewBox="0 0 22 19"><path d="M0,1.5 H7 L8.5,3 H22 V19 H0Z" fill="#f5c74e"/><rect x="0.8" y="3.6" width="20.4" height="15" fill="#fbe49a"/><rect x="1" y="1.8" width="6" height="1.2" fill="#3aa0e8"/><path d="M4.5,19 V11 H17.5 V19 H14.5 V14 H7.5 V19Z" fill="#2f9be8"/></svg>
<!-- search doc -->
<svg class="abs" style="left:28px;top:241px" width="24" height="26" viewBox="0 0 24 26"><path d="M4,1 H16 L19,4 V23 H4Z" fill="#f4f4f4"/><path d="M16,1 V4 H19Z" fill="#c8c8c8"/><circle cx="10.5" cy="12" r="4.6" fill="#fff" stroke="#f08a1c" stroke-width="2.4"/><path d="M7.2,15.6 L2.4,20.6" stroke="#f08a1c" stroke-width="3" stroke-linecap="round"/></svg>
<!-- monitor -->
<svg class="abs" style="left:28px;top:288px" width="25" height="26" viewBox="0 0 25 26"><path d="M2,2 L21,3.5 L19,17 L1,14Z" fill="#d6dce4"/><path d="M3.5,3.6 L11,4.2 L10,14 L2.6,12.8Z" fill="#1030c8"/><path d="M11,4.2 L19.6,4.8 L18,15.4 L10,14Z" fill="#aeb8e6"/><ellipse cx="10" cy="20.5" rx="5" ry="2.2" fill="#e0e4ea"/><rect x="8.5" y="15" width="3" height="5" fill="#c4cad2"/><circle cx="17" cy="19" r="5" fill="#eef1f4"/><path d="M14.5,19 L17,16.8 V21.2Z M19.8,19 L17.4,17 V21Z" fill="#2d9a3a"/></svg>
<!-- notepad -->
<svg class="abs" style="left:28px;top:336px" width="25" height="23" viewBox="0 0 25 23"><path d="M4,2 L16,0.5 L23,17 L8,22 L2,19Z" fill="#dfe8ea"/><path d="M5,3.5 L15.5,2.2 L21.4,16 L8.4,20.3Z" fill="#8fd0d4"/><path d="M5,3.5 L10,3 L14,18.4 L8.4,20.3Z" fill="#c8eef0" opacity="0.7"/><path d="M4,2 L2,19 L3.4,19.6 L5,3.5Z" fill="#d88a3a"/></svg>
<!-- wps -->
<svg class="abs" style="left:31px;top:384px" width="19" height="22" viewBox="0 0 19 22"><path d="M1.5,0 H14 L19,5 V20.5 A1.5,1.5 0 0 1 17.5,22 H1.5 A1.5,1.5 0 0 1 0,20.5 V1.5 A1.5,1.5 0 0 1 1.5,0Z" fill="#3bb44a"/><path d="M14,0 L19,5 H14Z" fill="#8fd898"/><path d="M14.5,8.6 H6.6 A2,2 0 0 0 6.6,12.4 H12.4 A2,2 0 0 1 12.4,16.2 H4.5" fill="none" stroke="#fff" stroke-width="1.7" stroke-linecap="round"/></svg>
<!--TRAYSTART-->
<svg class="abs" style="left:0;top:660px" width="81" height="155" viewBox="0 660 81 155">
<!-- row1 -->
<rect x="8" y="665" width="16" height="16" rx="3" fill="#2d8fe8"/><path d="M16,667.5 L20.5,669 V673 C20.5,675.5 18.5,677 16,678 C13.500,677 11.500,675.500 11.500,673 V669Z" fill="none" stroke="#fff" stroke-width="1.300"/><rect x="10" y="678.5" width="12" height="2" rx="1" fill="#e8f3fd"/>
<path d="M40,665 L47,667 V672 C47,676.500 44,679.500 40,681 C36,679.500 33,676.500 33,672 V667Z" fill="#fff"/><path d="M40,665 V681 M33,672.500 H47" stroke="#0b0e13" stroke-width="1.600"/><circle cx="44.500" cy="677" r="4.200" fill="#e0282e"/><path d="M42.700,675.200 L46.300,678.800 M46.300,675.200 L42.700,678.800" stroke="#fff" stroke-width="1.200"/>
<circle cx="64" cy="673" r="8" fill="#2b8de6"/><path d="M59.500,670 L68,672.500 L64,674 L66.500,678 L62.500,675 Z" fill="#fff"/>
<!-- row2 -->
<circle cx="16" cy="697" r="7.600" fill="#e53b2c"/><path d="M16,689.400 A7.600,7.600 0 0 1 23.600,697 A7.600,7.600 0 0 1 17.500,704.400 C20.500,701 20.500,695 16,693.600 C12.500,693 10,694.500 8.600,696 A7.600,7.600 0 0 1 16,689.400Z" fill="#2f8be6"/><path d="M17.500,689.600 A7.600,7.600 0 0 1 23.600,697 A7.600,7.600 0 0 1 18.500,704.200 C19.500,700 19,697 17.600,695 C18.600,693.500 18.600,691 17.500,689.600Z" fill="#2ea23a"/><path d="M11.500,698.500 C12,702.500 16.500,703.500 19.500,701 C21,700 22.500,698.800 23.500,698 A7.600,7.600 0 0 1 13,704 C11.600,702.500 11.200,700.500 11.500,698.500Z" fill="#f7c21a"/><circle cx="16.100" cy="697" r="2.800" fill="#0b0e13"/>
<circle cx="39.500" cy="696.500" r="4.800" fill="#c4161c"/><circle cx="38.500" cy="695.300" r="1.600" fill="#e2555a"/>
<circle cx="64" cy="697" r="7.600" fill="#3a8fd0"/><circle cx="64" cy="697" r="6" fill="#d8ecfa"/><path d="M60.500,694 C62,693 63,694 63.500,696 L64.500,701 L68.500,691.500" fill="none" stroke="#1d68b0" stroke-width="1.700"/>
<!-- row3 -->
<rect x="8" y="713" width="16" height="16" rx="2.500" fill="#8d8f92"/><path d="M12,722 L17.500,716 L20.500,718.500 L15,724.500 L11.500,725Z" fill="#e9e9ea"/>
<ellipse cx="37.300" cy="719" rx="5.600" ry="4.800" fill="#37c14a"/><ellipse cx="43.300" cy="723" rx="4.800" ry="4.100" fill="#e6e6e6"/>
<path d="M58.500,713 H67 L69.500,715.500 V727.500 H58.500Z" fill="#eeeeee"/><circle cx="64.600" cy="719" r="3" fill="#fff" stroke="#f08a1c" stroke-width="1.700"/><path d="M62.400,721.400 L58,725.500" stroke="#f08a1c" stroke-width="2.200" stroke-linecap="round"/>
<!-- row4 -->
<circle cx="16" cy="745" r="7.600" fill="#f3a83a"/><circle cx="16" cy="745" r="6.500" fill="none" stroke="#f9d79a" stroke-width="0.800"/><path d="M11,746 C11,744.500 12.500,744 13.500,744.300 C14,742.500 16.500,742 17.500,743.600 C19.500,743 21,744.500 20.600,746 C20.300,747.300 19,747.500 18,747.400 H13 C11.800,747.400 11,746.900 11,746Z" fill="#fff"/><path d="M14,750.500 L17,747.500 L21,749.500 L17.500,752.500Z" fill="#fff" opacity="0.900"/>
<rect x="33" y="737.500" width="14" height="15" rx="2" fill="#1e6fc0"/><rect x="38.300" y="741.500" width="3.400" height="7" rx="1.700" fill="#fff"/><path d="M38.500,741.500 L36,739.500 M41.500,741.500 L44,739.500" stroke="#fff" stroke-width="1"/>
<ellipse cx="63.500" cy="746" rx="5.600" ry="6.600" fill="#141414"/><ellipse cx="63.500" cy="748.500" rx="3.600" ry="3.800" fill="#fff"/><circle cx="63.500" cy="741.600" r="3.700" fill="#141414"/><circle cx="62.300" cy="741" r="1" fill="#fff"/><circle cx="64.700" cy="741" r="1" fill="#fff"/><ellipse cx="63.500" cy="743.300" rx="1.900" ry="0.800" fill="#f7a41a"/><path d="M59,745 Q63.500,747.500 68,745 L67.500,746.800 Q63.500,749 59.500,746.800Z" fill="#e0282e"/><ellipse cx="60.800" cy="752.500" rx="2" ry="0.900" fill="#f7a41a"/><ellipse cx="66.200" cy="752.500" rx="2" ry="0.900" fill="#f7a41a"/>
<!-- volume / wifi -->
<path d="M8.500,766.500 H11 L14.500,763.500 V775 L11,772 H8.500Z" fill="none" stroke="#fff" stroke-width="1.100"/><path d="M16.500,766.500 Q18.300,769.200 16.500,772" fill="none" stroke="#fff" stroke-width="1"/><path d="M18.800,764.800 Q21.600,769.200 18.800,773.700" fill="none" stroke="#d0d0d0" stroke-width="1"/><path d="M21,763 Q24.800,769.200 21,775.500" fill="none" stroke="#8a8a8a" stroke-width="1"/>
<g fill="none" stroke="#fff" stroke-width="1.300"><path d="M35.500,776 A11,11 0 0 1 46.500,765"/><path d="M38.800,776 A7.700,7.700 0 0 1 46.500,768.300"/><path d="M42,776 A4.500,4.500 0 0 1 46.500,771.500"/></g><circle cx="45.500" cy="775" r="1.500" fill="#fff"/>
<!-- ime S -->
<g transform="rotate(-14 51 797)"><rect x="44.500" y="791" width="13" height="12.500" rx="2" fill="#27a52a"/><path d="M55.300,794.600 H49 A1.500,1.500 0 0 0 49,797.600 H53 A1.500,1.500 0 0 1 53,800.600 H46.700" fill="none" stroke="#fff" stroke-width="2.100"/></g>
</svg>
<div class="abs" style="left:14px;top:789px;width:17px;color:#fff;font-size:14px;line-height:18px;text-align:center">中</div>
<!--TRAYEND-->
<div class="clock" style="top:827px">9:53</div>
<div class="clock" style="top:846px">星期五</div>
<div class="clock" style="top:865px">2021/8/27</div>
<div class="abs" style="left:0;top:895px;width:81px;height:1px;background:#8a8c90"></div>
</div>

<div class="abs" style="left:1446px;top:822px;width:152px;height:24px;background:#fafafa;border:1px solid #d8dde4;border-radius:2px"></div>
<svg class="abs" style="left:1432px;top:815px" width="168" height="36" viewBox="1432 815 168 36">
<g transform="rotate(-10 1448 832)"><rect x="1435" y="820" width="27" height="24" rx="4" fill="#25a52a"/><rect x="1437" y="822" width="23" height="20" rx="3" fill="#3fc43a"/><path d="M1457,826.500 H1444.500 A3,3 0 0 0 1444.500,832.500 H1452.500 A3,3 0 0 1 1452.500,838.500 H1440" fill="none" stroke="#fff" stroke-width="3.600"/></g>
<path d="M1499.500,827.500 C1505,830.500 1505,838.500 1499,841 C1496,842 1493,841.500 1491,840 C1496,839 1500,834 1499.500,827.500Z" fill="#3a3f4a"/>
<circle cx="1513.500" cy="830" r="1.800" fill="none" stroke="#3a3f4a" stroke-width="1.200"/><path d="M1519.500,834.500 C1521,834.500 1521.500,836 1521,837.500 L1519.500,840" fill="none" stroke="#3a3f4a" stroke-width="1.800"/>
<rect x="1533.500" y="829" width="15" height="10" rx="1.500" fill="none" stroke="#3a3f4a" stroke-width="1.600"/><path d="M1536,832 H1546 M1536,834.500 H1546 M1538,837 H1544" stroke="#3a3f4a" stroke-width="1.200" stroke-dasharray="1.500 1"/>
<circle cx="1563.500" cy="830" r="3" fill="#3a3f4a"/><path d="M1560,841 L1557.500,837.500 L1560,834.500 H1567 L1569.500,837.500 L1567,841Z" fill="#3a3f4a"/>
<g fill="#3a3f4a"><circle cx="1581" cy="831" r="3"/><circle cx="1588" cy="831" r="3"/><circle cx="1581" cy="838" r="3"/><circle cx="1588" cy="838" r="3"/></g><rect x="1582" y="832" width="5" height="5" fill="#3a3f4a"/>
</svg>
<div class="abs" style="left:1466px;top:825px;width:18px;height:18px;font-size:16px;line-height:18px;color:#3a3f4a;font-weight:bold;text-align:center">五</div>

</body>
</html>
